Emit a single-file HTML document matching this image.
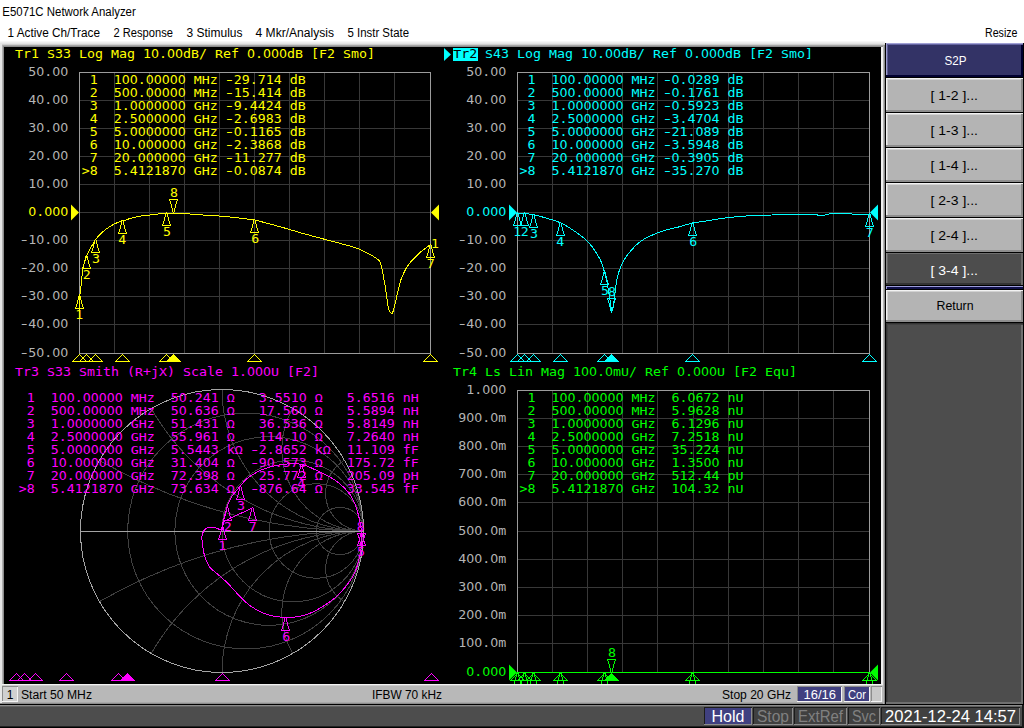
<!DOCTYPE html>
<html lang="en">
<head>
<meta charset="utf-8">
<title>E5071C Network Analyzer</title>
<style>
html,body{margin:0;padding:0;background:#fff;overflow:hidden}
body{width:1024px;height:728px;position:relative}
svg{position:absolute;left:0;top:0;display:block}
text{white-space:pre}
.m{font-family:'DejaVu Sans Mono','Liberation Mono',monospace;font-size:12.0px}
.d{font-family:'DejaVu Sans','Liberation Sans',sans-serif}
.u{font-size:10.8px}
.s{font-family:'Liberation Sans','DejaVu Sans',sans-serif}
</style>
</head>
<body>
<svg width="1024" height="728" viewBox="0 0 1024 728">
<defs>
<linearGradient id="gChan" x1="0" y1="0" x2="0" y2="1">
<stop offset="0" stop-color="#d4d4d4"/><stop offset="0.2" stop-color="#c2c2c2"/><stop offset="0.8" stop-color="#b6b6b6"/><stop offset="1" stop-color="#a0a0a0"/></linearGradient>
</defs>
<rect x="0" y="0" width="1024" height="728" fill="#ffffff"/>
<text class="s" x="2.3" y="16" font-size="12.3" fill="#000" textLength="133.5" lengthAdjust="spacingAndGlyphs">E5071C Network Analyzer</text>
<text class="s" x="7.5" y="37" font-size="12.3" fill="#000" textLength="92.5" lengthAdjust="spacingAndGlyphs">1 Active Ch/Trace</text>
<text class="s" x="113.5" y="37" font-size="12.3" fill="#000" textLength="59.5" lengthAdjust="spacingAndGlyphs">2 Response</text>
<text class="s" x="186.5" y="37" font-size="12.3" fill="#000" textLength="56" lengthAdjust="spacingAndGlyphs">3 Stimulus</text>
<text class="s" x="255.5" y="37" font-size="12.3" fill="#000" textLength="78.5" lengthAdjust="spacingAndGlyphs">4 Mkr/Analysis</text>
<text class="s" x="347.5" y="37" font-size="12.3" fill="#000" textLength="61.5" lengthAdjust="spacingAndGlyphs">5 Instr State</text>
<text class="s" x="985" y="37" font-size="12.3" fill="#000" textLength="32.5" lengthAdjust="spacingAndGlyphs">Resize</text>
<rect x="0" y="41" width="885" height="1" fill="#f6f6f6"/>
<rect x="0" y="42" width="885" height="1" fill="#ededed"/>
<rect x="0" y="43" width="885" height="1" fill="#e4e4e4"/>
<rect x="0" y="44" width="885" height="1" fill="#cfcfcf"/>
<rect x="0" y="45" width="885" height="1" fill="#a6a6a6"/>
<rect x="0" y="46" width="885" height="1" fill="#8c8c8c"/>
<rect x="0" y="44" width="2" height="660" fill="#e6e6e6"/>
<rect x="2" y="45" width="1" height="659" fill="#b0b0b0"/>
<rect x="3" y="46" width="1" height="658" fill="#8c8c8c"/>
<rect x="4" y="47" width="877" height="637" fill="#000"/>
<rect x="881" y="47" width="2" height="657" fill="#f0f0f0"/>
<rect x="883" y="46" width="1" height="658" fill="#b4b4b4"/>
<rect x="884" y="45" width="1" height="659" fill="#8c8c8c"/>
<rect x="0" y="684" width="885" height="20" fill="#b8b8b8"/>
<rect x="0" y="684" width="883" height="1" fill="#f2f2f2"/>
<rect x="0" y="685" width="883" height="1" fill="#cccccc"/>
<rect x="0" y="702" width="885" height="1" fill="#a8a8a8"/>
<rect x="0" y="703" width="885" height="1" fill="#8c8c8c"/>
<rect x="0" y="684" width="2" height="19" fill="#e6e6e6"/>
<rect x="883" y="684" width="1" height="20" fill="#b4b4b4"/>
<rect x="884" y="684" width="1" height="20" fill="#8c8c8c"/>
<rect x="885" y="43" width="139" height="662" fill="#000"/>
<rect x="886" y="43" width="137" height="32" fill="#333366"/>
<rect x="886" y="43" width="137" height="1" fill="#a0a0d4"/>
<rect x="886" y="44" width="137" height="1" fill="#6464a0"/>
<rect x="886" y="43" width="1" height="32" fill="#9c9cd0"/>
<rect x="887" y="44" width="1" height="31" fill="#5c5c94"/>
<rect x="886" y="75" width="137" height="2" fill="#000030"/>
<rect x="1021" y="45" width="2" height="32" fill="#000030"/>
<text class="s" x="944.5" y="64.6" font-size="13" fill="#fff" textLength="22" lengthAdjust="spacingAndGlyphs">S2P</text>
<rect x="886" y="78" width="137" height="34" fill="#b4b4b4"/>
<rect x="886" y="78" width="137" height="1" fill="#f2f2f2"/>
<rect x="886" y="79" width="137" height="1" fill="#d2d2d2"/>
<rect x="886" y="78" width="1" height="33" fill="#f2f2f2"/>
<rect x="887" y="79" width="1" height="32" fill="#d2d2d2"/>
<rect x="886" y="110" width="137" height="2" fill="#8e8e8e"/>
<rect x="1021" y="79" width="2" height="33" fill="#8e8e8e"/>
<text class="s" x="930.5" y="99.7" font-size="13" fill="#000" textLength="47.5" lengthAdjust="spacingAndGlyphs">[ 1-2 ]...</text>
<rect x="886" y="113" width="137" height="34" fill="#b4b4b4"/>
<rect x="886" y="113" width="137" height="1" fill="#f2f2f2"/>
<rect x="886" y="114" width="137" height="1" fill="#d2d2d2"/>
<rect x="886" y="113" width="1" height="33" fill="#f2f2f2"/>
<rect x="887" y="114" width="1" height="32" fill="#d2d2d2"/>
<rect x="886" y="145" width="137" height="2" fill="#8e8e8e"/>
<rect x="1021" y="114" width="2" height="33" fill="#8e8e8e"/>
<text class="s" x="930.5" y="134.7" font-size="13" fill="#000" textLength="47.5" lengthAdjust="spacingAndGlyphs">[ 1-3 ]...</text>
<rect x="886" y="148" width="137" height="34" fill="#b4b4b4"/>
<rect x="886" y="148" width="137" height="1" fill="#f2f2f2"/>
<rect x="886" y="149" width="137" height="1" fill="#d2d2d2"/>
<rect x="886" y="148" width="1" height="33" fill="#f2f2f2"/>
<rect x="887" y="149" width="1" height="32" fill="#d2d2d2"/>
<rect x="886" y="180" width="137" height="2" fill="#8e8e8e"/>
<rect x="1021" y="149" width="2" height="33" fill="#8e8e8e"/>
<text class="s" x="930.5" y="169.7" font-size="13" fill="#000" textLength="47.5" lengthAdjust="spacingAndGlyphs">[ 1-4 ]...</text>
<rect x="886" y="183" width="137" height="34" fill="#b4b4b4"/>
<rect x="886" y="183" width="137" height="1" fill="#f2f2f2"/>
<rect x="886" y="184" width="137" height="1" fill="#d2d2d2"/>
<rect x="886" y="183" width="1" height="33" fill="#f2f2f2"/>
<rect x="887" y="184" width="1" height="32" fill="#d2d2d2"/>
<rect x="886" y="215" width="137" height="2" fill="#8e8e8e"/>
<rect x="1021" y="184" width="2" height="33" fill="#8e8e8e"/>
<text class="s" x="930.5" y="204.7" font-size="13" fill="#000" textLength="47.5" lengthAdjust="spacingAndGlyphs">[ 2-3 ]...</text>
<rect x="886" y="218" width="137" height="34" fill="#b4b4b4"/>
<rect x="886" y="218" width="137" height="1" fill="#f2f2f2"/>
<rect x="886" y="219" width="137" height="1" fill="#d2d2d2"/>
<rect x="886" y="218" width="1" height="33" fill="#f2f2f2"/>
<rect x="887" y="219" width="1" height="32" fill="#d2d2d2"/>
<rect x="886" y="250" width="137" height="2" fill="#8e8e8e"/>
<rect x="1021" y="219" width="2" height="33" fill="#8e8e8e"/>
<text class="s" x="930.5" y="239.7" font-size="13" fill="#000" textLength="47.5" lengthAdjust="spacingAndGlyphs">[ 2-4 ]...</text>
<rect x="886" y="253" width="137" height="32" fill="#4d4d4d"/>
<rect x="886" y="253" width="137" height="1" fill="#6e6e6e"/>
<rect x="886" y="283" width="137" height="2" fill="#333333"/>
<rect x="886" y="253" width="1" height="30" fill="#888888"/>
<rect x="887" y="254" width="1" height="29" fill="#666666"/>
<rect x="1021" y="254" width="2" height="31" fill="#6a6a6a"/>
<text class="s" x="930.5" y="274.7" font-size="13" fill="#fff" textLength="47.5" lengthAdjust="spacingAndGlyphs">[ 3-4 ]...</text>
<rect x="886" y="286" width="137" height="1" fill="#9c9cd8"/>
<rect x="886" y="287" width="137" height="2" fill="#10104a"/>
<rect x="886" y="286" width="1" height="3" fill="#9c9cd8"/>
<rect x="886" y="290" width="137" height="32" fill="#b4b4b4"/>
<rect x="886" y="290" width="137" height="1" fill="#f2f2f2"/>
<rect x="886" y="291" width="137" height="1" fill="#d2d2d2"/>
<rect x="886" y="290" width="1" height="31" fill="#f2f2f2"/>
<rect x="887" y="291" width="1" height="30" fill="#d2d2d2"/>
<rect x="886" y="320" width="137" height="2" fill="#8e8e8e"/>
<rect x="1021" y="291" width="2" height="31" fill="#8e8e8e"/>
<text class="s" x="936.5" y="309.6" font-size="13" fill="#000" textLength="37" lengthAdjust="spacingAndGlyphs">Return</text>
<rect x="886" y="323" width="137" height="381" fill="#4d4d4d"/>
<rect x="886" y="323" width="137" height="1" fill="#333333"/>
<rect x="886" y="324" width="137" height="1" fill="#424242"/>
<rect x="886" y="323" width="1" height="379" fill="#333333"/>
<rect x="887" y="324" width="1" height="378" fill="#424242"/>
<rect x="886" y="702" width="137" height="2" fill="#707070"/>
<rect x="1021" y="325" width="2" height="379" fill="#707070"/>
<rect x="1023" y="43" width="1" height="662" fill="#000"/>
<rect x="2" y="686" width="16" height="16" fill="#d0d0d0"/>
<rect x="2" y="686" width="16" height="1" fill="#8c8c8c"/>
<rect x="2" y="686" width="1" height="16" fill="#8c8c8c"/>
<rect x="2" y="701" width="16" height="1" fill="#f4f4f4"/>
<rect x="17" y="687" width="1" height="15" fill="#f4f4f4"/>
<text class="s" x="6.8" y="699" font-size="12" fill="#000">1</text>
<text class="s" x="21" y="698.8" font-size="12" fill="#000" textLength="71" lengthAdjust="spacingAndGlyphs">Start 50 MHz</text>
<text class="s" x="372" y="698.8" font-size="12" fill="#000" textLength="70" lengthAdjust="spacingAndGlyphs">IFBW 70 kHz</text>
<text class="s" x="722" y="698.8" font-size="12" fill="#000" textLength="69" lengthAdjust="spacingAndGlyphs">Stop 20 GHz</text>
<rect x="797" y="686" width="45" height="16" fill="#404080"/>
<rect x="797" y="686" width="45" height="1" fill="#8c8c8c"/>
<rect x="797" y="686" width="1" height="16" fill="#8c8c8c"/>
<rect x="797" y="701" width="45" height="1" fill="#f4f4f4"/>
<rect x="841" y="687" width="1" height="15" fill="#f4f4f4"/>
<text class="s" x="803.5" y="698.8" font-size="12" fill="#fff" textLength="32.5" lengthAdjust="spacingAndGlyphs">16/16</text>
<rect x="844" y="686" width="26" height="16" fill="#404080"/>
<rect x="844" y="686" width="26" height="1" fill="#8c8c8c"/>
<rect x="844" y="686" width="1" height="16" fill="#8c8c8c"/>
<rect x="844" y="701" width="26" height="1" fill="#f4f4f4"/>
<rect x="869" y="687" width="1" height="15" fill="#f4f4f4"/>
<text class="s" x="848" y="698.8" font-size="12" fill="#fff" textLength="18" lengthAdjust="spacingAndGlyphs">Cor</text>
<rect x="871" y="686" width="11" height="16" fill="#c8c8c8"/>
<rect x="871" y="686" width="11" height="1" fill="#8c8c8c"/>
<rect x="871" y="686" width="1" height="16" fill="#8c8c8c"/>
<rect x="871" y="701" width="11" height="1" fill="#f4f4f4"/>
<rect x="881" y="687" width="1" height="15" fill="#f4f4f4"/>
<rect x="0" y="704" width="1024" height="24" fill="#4d4d4d"/>
<rect x="0" y="704" width="1024" height="1" fill="#000"/>
<rect x="0" y="705" width="1022" height="1" fill="#8a8a8a"/>
<rect x="0" y="706" width="1022" height="1" fill="#626262"/>
<rect x="0" y="726" width="1024" height="1" fill="#222"/>
<rect x="0" y="727" width="1024" height="1" fill="#000"/>
<rect x="1022" y="705" width="2" height="23" fill="#1a1a1a"/>
<rect x="704" y="707" width="48" height="18" fill="#404080"/>
<rect x="704" y="707" width="48" height="1" fill="#1c1c1c"/>
<rect x="704" y="707" width="1" height="17" fill="#1c1c1c"/>
<rect x="704" y="724" width="48" height="1" fill="#8c8c8c"/>
<rect x="751" y="708" width="1" height="17" fill="#8c8c8c"/>
<text class="s" x="711.5" y="721.6" font-size="16.3" fill="#fff" textLength="33" lengthAdjust="spacingAndGlyphs">Hold</text>
<rect x="753" y="707" width="40" height="18" fill="#404040"/>
<rect x="753" y="707" width="40" height="1" fill="#1c1c1c"/>
<rect x="753" y="707" width="1" height="17" fill="#1c1c1c"/>
<rect x="753" y="724" width="40" height="1" fill="#8c8c8c"/>
<rect x="792" y="708" width="1" height="17" fill="#8c8c8c"/>
<text class="s" x="757" y="721.6" font-size="16.3" fill="#808080" textLength="32" lengthAdjust="spacingAndGlyphs">Stop</text>
<rect x="794" y="707" width="53" height="18" fill="#404040"/>
<rect x="794" y="707" width="53" height="1" fill="#1c1c1c"/>
<rect x="794" y="707" width="1" height="17" fill="#1c1c1c"/>
<rect x="794" y="724" width="53" height="1" fill="#8c8c8c"/>
<rect x="846" y="708" width="1" height="17" fill="#8c8c8c"/>
<text class="s" x="798" y="721.6" font-size="16.3" fill="#808080" textLength="45" lengthAdjust="spacingAndGlyphs">ExtRef</text>
<rect x="848" y="707" width="32" height="18" fill="#404040"/>
<rect x="848" y="707" width="32" height="1" fill="#1c1c1c"/>
<rect x="848" y="707" width="1" height="17" fill="#1c1c1c"/>
<rect x="848" y="724" width="32" height="1" fill="#8c8c8c"/>
<rect x="879" y="708" width="1" height="17" fill="#8c8c8c"/>
<text class="s" x="852" y="721.6" font-size="16.3" fill="#808080" textLength="24" lengthAdjust="spacingAndGlyphs">Svc</text>
<rect x="881" y="707" width="139" height="18" fill="#404040"/>
<rect x="881" y="707" width="139" height="1" fill="#1c1c1c"/>
<rect x="881" y="707" width="1" height="17" fill="#1c1c1c"/>
<rect x="881" y="724" width="139" height="1" fill="#8c8c8c"/>
<rect x="1019" y="708" width="1" height="17" fill="#8c8c8c"/>
<text class="s" x="885" y="721.6" font-size="16.3" fill="#fff" textLength="131" lengthAdjust="spacingAndGlyphs">2021-12-24 14:57</text>
<defs><path id="mu" shape-rendering="crispEdges" d="M0 0h1v1h-1zM-1 1h1v4h-1zM1 1h1v4h-1zM-2 5h1v4h-1zM2 5h1v4h-1zM-3 9h1v3h-1zM3 9h1v3h-1zM-4 12h1v1h-1zM4 12h1v1h-1zM-4 13h9v1h-9z"/><path id="md" shape-rendering="crispEdges" d="M0 0h1v1h-1zM-1 -4h1v4h-1zM1 -4h1v4h-1zM-2 -8h1v4h-1zM2 -8h1v4h-1zM-3 -11h1v3h-1zM3 -11h1v3h-1zM-4 -12h1v1h-1zM4 -12h1v1h-1zM-4 -13h9v1h-9z"/></defs>
<rect x="114" y="72" width="1" height="282" fill="#383838"/>
<rect x="149" y="72" width="1" height="282" fill="#383838"/>
<rect x="184" y="72" width="1" height="282" fill="#383838"/>
<rect x="219" y="72" width="1" height="282" fill="#383838"/>
<rect x="254" y="72" width="1" height="282" fill="#383838"/>
<rect x="289" y="72" width="1" height="282" fill="#383838"/>
<rect x="324" y="72" width="1" height="282" fill="#383838"/>
<rect x="359" y="72" width="1" height="282" fill="#383838"/>
<rect x="394" y="72" width="1" height="282" fill="#383838"/>
<rect x="79" y="100" width="352" height="1" fill="#383838"/>
<rect x="79" y="128" width="352" height="1" fill="#383838"/>
<rect x="79" y="156" width="352" height="1" fill="#383838"/>
<rect x="79" y="184" width="352" height="1" fill="#383838"/>
<rect x="79" y="212" width="352" height="1" fill="#383838"/>
<rect x="79" y="240" width="352" height="1" fill="#383838"/>
<rect x="79" y="268" width="352" height="1" fill="#383838"/>
<rect x="79" y="296" width="352" height="1" fill="#383838"/>
<rect x="79" y="324" width="352" height="1" fill="#383838"/>
<rect x="79" y="72" width="352" height="1" fill="#9c9c9c"/>
<rect x="79" y="353" width="352" height="1" fill="#9c9c9c"/>
<rect x="79" y="72" width="1" height="282" fill="#9c9c9c"/>
<rect x="430" y="72" width="1" height="282" fill="#9c9c9c"/>
<text class="m" y="58.3" fill="#ffff00"><tspan class="u" x="15" textLength="8" lengthAdjust="spacingAndGlyphs">T</tspan><tspan x="23" textLength="16" lengthAdjust="spacingAndGlyphs">r1</tspan> <tspan class="u" x="47" textLength="8" lengthAdjust="spacingAndGlyphs">S</tspan><tspan x="55" textLength="16" lengthAdjust="spacingAndGlyphs">33</tspan> <tspan class="u" x="79" textLength="8" lengthAdjust="spacingAndGlyphs">L</tspan><tspan x="87" textLength="16" lengthAdjust="spacingAndGlyphs">og</tspan> <tspan class="u" x="111" textLength="8" lengthAdjust="spacingAndGlyphs">M</tspan><tspan x="119" textLength="32" lengthAdjust="spacingAndGlyphs">ag 1</tspan><tspan class="d" x="151" textLength="8" lengthAdjust="spacingAndGlyphs">0</tspan><tspan x="159" textLength="8" lengthAdjust="spacingAndGlyphs">.</tspan><tspan class="d" x="167" textLength="16" lengthAdjust="spacingAndGlyphs">00</tspan><tspan x="183" textLength="8" lengthAdjust="spacingAndGlyphs">d</tspan><tspan class="u" x="191" textLength="8" lengthAdjust="spacingAndGlyphs">B</tspan><tspan x="199" textLength="8" lengthAdjust="spacingAndGlyphs">/</tspan> <tspan class="u" x="215" textLength="8" lengthAdjust="spacingAndGlyphs">R</tspan><tspan x="223" textLength="16" lengthAdjust="spacingAndGlyphs">ef</tspan> <tspan class="d" x="247" textLength="8" lengthAdjust="spacingAndGlyphs">0</tspan><tspan x="255" textLength="8" lengthAdjust="spacingAndGlyphs">.</tspan><tspan class="d" x="263" textLength="24" lengthAdjust="spacingAndGlyphs">000</tspan><tspan x="287" textLength="8" lengthAdjust="spacingAndGlyphs">d</tspan><tspan class="u" x="295" textLength="8" lengthAdjust="spacingAndGlyphs">B</tspan> <tspan x="311" textLength="8" lengthAdjust="spacingAndGlyphs">[</tspan><tspan class="u" x="319" textLength="8" lengthAdjust="spacingAndGlyphs">F</tspan><tspan x="327" textLength="8" lengthAdjust="spacingAndGlyphs">2</tspan> <tspan class="u" x="343" textLength="8" lengthAdjust="spacingAndGlyphs">S</tspan><tspan x="351" textLength="24" lengthAdjust="spacingAndGlyphs">mo]</tspan></text>
<text class="m" y="75.9" fill="#b4b4b4"><tspan x="28.3" textLength="8" lengthAdjust="spacingAndGlyphs">5</tspan><tspan class="d" x="36.3" textLength="8" lengthAdjust="spacingAndGlyphs">0</tspan><tspan x="44.3" textLength="8" lengthAdjust="spacingAndGlyphs">.</tspan><tspan class="d" x="52.3" textLength="16" lengthAdjust="spacingAndGlyphs">00</tspan></text>
<text class="m" y="103.9" fill="#b4b4b4"><tspan x="28.3" textLength="8" lengthAdjust="spacingAndGlyphs">4</tspan><tspan class="d" x="36.3" textLength="8" lengthAdjust="spacingAndGlyphs">0</tspan><tspan x="44.3" textLength="8" lengthAdjust="spacingAndGlyphs">.</tspan><tspan class="d" x="52.3" textLength="16" lengthAdjust="spacingAndGlyphs">00</tspan></text>
<text class="m" y="131.9" fill="#b4b4b4"><tspan x="28.3" textLength="8" lengthAdjust="spacingAndGlyphs">3</tspan><tspan class="d" x="36.3" textLength="8" lengthAdjust="spacingAndGlyphs">0</tspan><tspan x="44.3" textLength="8" lengthAdjust="spacingAndGlyphs">.</tspan><tspan class="d" x="52.3" textLength="16" lengthAdjust="spacingAndGlyphs">00</tspan></text>
<text class="m" y="159.9" fill="#b4b4b4"><tspan x="28.3" textLength="8" lengthAdjust="spacingAndGlyphs">2</tspan><tspan class="d" x="36.3" textLength="8" lengthAdjust="spacingAndGlyphs">0</tspan><tspan x="44.3" textLength="8" lengthAdjust="spacingAndGlyphs">.</tspan><tspan class="d" x="52.3" textLength="16" lengthAdjust="spacingAndGlyphs">00</tspan></text>
<text class="m" y="187.9" fill="#b4b4b4"><tspan x="28.3" textLength="8" lengthAdjust="spacingAndGlyphs">1</tspan><tspan class="d" x="36.3" textLength="8" lengthAdjust="spacingAndGlyphs">0</tspan><tspan x="44.3" textLength="8" lengthAdjust="spacingAndGlyphs">.</tspan><tspan class="d" x="52.3" textLength="16" lengthAdjust="spacingAndGlyphs">00</tspan></text>
<text class="m" y="215.9" fill="#ffff00"><tspan class="d" x="28.3" textLength="8" lengthAdjust="spacingAndGlyphs">0</tspan><tspan x="36.3" textLength="8" lengthAdjust="spacingAndGlyphs">.</tspan><tspan class="d" x="44.3" textLength="24" lengthAdjust="spacingAndGlyphs">000</tspan></text>
<text class="m" y="243.9" fill="#b4b4b4"><tspan x="18.4" textLength="11.4" lengthAdjust="spacingAndGlyphs">-</tspan><tspan x="28.3" textLength="8" lengthAdjust="spacingAndGlyphs">1</tspan><tspan class="d" x="36.3" textLength="8" lengthAdjust="spacingAndGlyphs">0</tspan><tspan x="44.3" textLength="8" lengthAdjust="spacingAndGlyphs">.</tspan><tspan class="d" x="52.3" textLength="16" lengthAdjust="spacingAndGlyphs">00</tspan></text>
<text class="m" y="271.9" fill="#b4b4b4"><tspan x="18.4" textLength="11.4" lengthAdjust="spacingAndGlyphs">-</tspan><tspan x="28.3" textLength="8" lengthAdjust="spacingAndGlyphs">2</tspan><tspan class="d" x="36.3" textLength="8" lengthAdjust="spacingAndGlyphs">0</tspan><tspan x="44.3" textLength="8" lengthAdjust="spacingAndGlyphs">.</tspan><tspan class="d" x="52.3" textLength="16" lengthAdjust="spacingAndGlyphs">00</tspan></text>
<text class="m" y="299.9" fill="#b4b4b4"><tspan x="18.4" textLength="11.4" lengthAdjust="spacingAndGlyphs">-</tspan><tspan x="28.3" textLength="8" lengthAdjust="spacingAndGlyphs">3</tspan><tspan class="d" x="36.3" textLength="8" lengthAdjust="spacingAndGlyphs">0</tspan><tspan x="44.3" textLength="8" lengthAdjust="spacingAndGlyphs">.</tspan><tspan class="d" x="52.3" textLength="16" lengthAdjust="spacingAndGlyphs">00</tspan></text>
<text class="m" y="327.9" fill="#b4b4b4"><tspan x="18.4" textLength="11.4" lengthAdjust="spacingAndGlyphs">-</tspan><tspan x="28.3" textLength="8" lengthAdjust="spacingAndGlyphs">4</tspan><tspan class="d" x="36.3" textLength="8" lengthAdjust="spacingAndGlyphs">0</tspan><tspan x="44.3" textLength="8" lengthAdjust="spacingAndGlyphs">.</tspan><tspan class="d" x="52.3" textLength="16" lengthAdjust="spacingAndGlyphs">00</tspan></text>
<text class="m" y="356.9" fill="#b4b4b4"><tspan x="18.4" textLength="11.4" lengthAdjust="spacingAndGlyphs">-</tspan><tspan x="28.3" textLength="8" lengthAdjust="spacingAndGlyphs">5</tspan><tspan class="d" x="36.3" textLength="8" lengthAdjust="spacingAndGlyphs">0</tspan><tspan x="44.3" textLength="8" lengthAdjust="spacingAndGlyphs">.</tspan><tspan class="d" x="52.3" textLength="16" lengthAdjust="spacingAndGlyphs">00</tspan></text>
<text class="m" y="84.3" fill="#ffff00"><tspan x="89.7" textLength="32" lengthAdjust="spacingAndGlyphs">1  1</tspan><tspan class="d" x="121.7" textLength="16" lengthAdjust="spacingAndGlyphs">00</tspan><tspan x="137.7" textLength="8" lengthAdjust="spacingAndGlyphs">.</tspan><tspan class="d" x="145.7" textLength="40" lengthAdjust="spacingAndGlyphs">00000</tspan> <tspan x="193.7" textLength="0" lengthAdjust="spacingAndGlyphs"></tspan><tspan class="u" x="193.7" textLength="16" lengthAdjust="spacingAndGlyphs">MH</tspan><tspan x="209.7" textLength="8" lengthAdjust="spacingAndGlyphs">z</tspan> <tspan x="223.8" textLength="11.4" lengthAdjust="spacingAndGlyphs">-</tspan><tspan x="233.7" textLength="64" lengthAdjust="spacingAndGlyphs">29.714 d</tspan><tspan class="u" x="297.7" textLength="8" lengthAdjust="spacingAndGlyphs">B</tspan></text>
<text class="m" y="97.3" fill="#ffff00"><tspan x="89.7" textLength="32" lengthAdjust="spacingAndGlyphs">2  5</tspan><tspan class="d" x="121.7" textLength="16" lengthAdjust="spacingAndGlyphs">00</tspan><tspan x="137.7" textLength="8" lengthAdjust="spacingAndGlyphs">.</tspan><tspan class="d" x="145.7" textLength="40" lengthAdjust="spacingAndGlyphs">00000</tspan> <tspan x="193.7" textLength="0" lengthAdjust="spacingAndGlyphs"></tspan><tspan class="u" x="193.7" textLength="16" lengthAdjust="spacingAndGlyphs">MH</tspan><tspan x="209.7" textLength="8" lengthAdjust="spacingAndGlyphs">z</tspan> <tspan x="223.8" textLength="11.4" lengthAdjust="spacingAndGlyphs">-</tspan><tspan x="233.7" textLength="64" lengthAdjust="spacingAndGlyphs">15.414 d</tspan><tspan class="u" x="297.7" textLength="8" lengthAdjust="spacingAndGlyphs">B</tspan></text>
<text class="m" y="110.3" fill="#ffff00"><tspan x="89.7" textLength="40" lengthAdjust="spacingAndGlyphs">3  1.</tspan><tspan class="d" x="129.7" textLength="56" lengthAdjust="spacingAndGlyphs">0000000</tspan> <tspan x="193.7" textLength="0" lengthAdjust="spacingAndGlyphs"></tspan><tspan class="u" x="193.7" textLength="16" lengthAdjust="spacingAndGlyphs">GH</tspan><tspan x="209.7" textLength="8" lengthAdjust="spacingAndGlyphs">z</tspan> <tspan x="223.8" textLength="11.4" lengthAdjust="spacingAndGlyphs">-</tspan><tspan x="233.7" textLength="64" lengthAdjust="spacingAndGlyphs">9.4424 d</tspan><tspan class="u" x="297.7" textLength="8" lengthAdjust="spacingAndGlyphs">B</tspan></text>
<text class="m" y="123.3" fill="#ffff00"><tspan x="89.7" textLength="48" lengthAdjust="spacingAndGlyphs">4  2.5</tspan><tspan class="d" x="137.7" textLength="48" lengthAdjust="spacingAndGlyphs">000000</tspan> <tspan x="193.7" textLength="0" lengthAdjust="spacingAndGlyphs"></tspan><tspan class="u" x="193.7" textLength="16" lengthAdjust="spacingAndGlyphs">GH</tspan><tspan x="209.7" textLength="8" lengthAdjust="spacingAndGlyphs">z</tspan> <tspan x="223.8" textLength="11.4" lengthAdjust="spacingAndGlyphs">-</tspan><tspan x="233.7" textLength="64" lengthAdjust="spacingAndGlyphs">2.6983 d</tspan><tspan class="u" x="297.7" textLength="8" lengthAdjust="spacingAndGlyphs">B</tspan></text>
<text class="m" y="136.3" fill="#ffff00"><tspan x="89.7" textLength="40" lengthAdjust="spacingAndGlyphs">5  5.</tspan><tspan class="d" x="129.7" textLength="56" lengthAdjust="spacingAndGlyphs">0000000</tspan> <tspan x="193.7" textLength="0" lengthAdjust="spacingAndGlyphs"></tspan><tspan class="u" x="193.7" textLength="16" lengthAdjust="spacingAndGlyphs">GH</tspan><tspan x="209.7" textLength="8" lengthAdjust="spacingAndGlyphs">z</tspan> <tspan x="223.8" textLength="11.4" lengthAdjust="spacingAndGlyphs">-</tspan><tspan class="d" x="233.7" textLength="8" lengthAdjust="spacingAndGlyphs">0</tspan><tspan x="241.7" textLength="56" lengthAdjust="spacingAndGlyphs">.1165 d</tspan><tspan class="u" x="297.7" textLength="8" lengthAdjust="spacingAndGlyphs">B</tspan></text>
<text class="m" y="149.3" fill="#ffff00"><tspan x="89.7" textLength="32" lengthAdjust="spacingAndGlyphs">6  1</tspan><tspan class="d" x="121.7" textLength="8" lengthAdjust="spacingAndGlyphs">0</tspan><tspan x="129.7" textLength="8" lengthAdjust="spacingAndGlyphs">.</tspan><tspan class="d" x="137.7" textLength="48" lengthAdjust="spacingAndGlyphs">000000</tspan> <tspan x="193.7" textLength="0" lengthAdjust="spacingAndGlyphs"></tspan><tspan class="u" x="193.7" textLength="16" lengthAdjust="spacingAndGlyphs">GH</tspan><tspan x="209.7" textLength="8" lengthAdjust="spacingAndGlyphs">z</tspan> <tspan x="223.8" textLength="11.4" lengthAdjust="spacingAndGlyphs">-</tspan><tspan x="233.7" textLength="64" lengthAdjust="spacingAndGlyphs">2.3868 d</tspan><tspan class="u" x="297.7" textLength="8" lengthAdjust="spacingAndGlyphs">B</tspan></text>
<text class="m" y="162.3" fill="#ffff00"><tspan x="89.7" textLength="32" lengthAdjust="spacingAndGlyphs">7  2</tspan><tspan class="d" x="121.7" textLength="8" lengthAdjust="spacingAndGlyphs">0</tspan><tspan x="129.7" textLength="8" lengthAdjust="spacingAndGlyphs">.</tspan><tspan class="d" x="137.7" textLength="48" lengthAdjust="spacingAndGlyphs">000000</tspan> <tspan x="193.7" textLength="0" lengthAdjust="spacingAndGlyphs"></tspan><tspan class="u" x="193.7" textLength="16" lengthAdjust="spacingAndGlyphs">GH</tspan><tspan x="209.7" textLength="8" lengthAdjust="spacingAndGlyphs">z</tspan> <tspan x="223.8" textLength="11.4" lengthAdjust="spacingAndGlyphs">-</tspan><tspan x="233.7" textLength="64" lengthAdjust="spacingAndGlyphs">11.277 d</tspan><tspan class="u" x="297.7" textLength="8" lengthAdjust="spacingAndGlyphs">B</tspan></text>
<text class="m" y="175.3" fill="#ffff00"><tspan x="81.7" textLength="96" lengthAdjust="spacingAndGlyphs">&gt;8  5.412187</tspan><tspan class="d" x="177.7" textLength="8" lengthAdjust="spacingAndGlyphs">0</tspan> <tspan x="193.7" textLength="0" lengthAdjust="spacingAndGlyphs"></tspan><tspan class="u" x="193.7" textLength="16" lengthAdjust="spacingAndGlyphs">GH</tspan><tspan x="209.7" textLength="8" lengthAdjust="spacingAndGlyphs">z</tspan> <tspan x="223.8" textLength="11.4" lengthAdjust="spacingAndGlyphs">-</tspan><tspan class="d" x="233.7" textLength="8" lengthAdjust="spacingAndGlyphs">0</tspan><tspan x="241.7" textLength="8" lengthAdjust="spacingAndGlyphs">.</tspan><tspan class="d" x="249.7" textLength="8" lengthAdjust="spacingAndGlyphs">0</tspan><tspan x="257.7" textLength="40" lengthAdjust="spacingAndGlyphs">874 d</tspan><tspan class="u" x="297.7" textLength="8" lengthAdjust="spacingAndGlyphs">B</tspan></text>
<polyline points="79.5,312.3 79.5,309.6 79.5,305.7 79.5,301.6 79.6,298.3 79.8,296.2 80.0,294.6 80.2,293.2 80.5,291.3 80.7,288.8 81.0,285.9 81.2,283.0 81.5,280.3 81.7,278.0 82.0,275.9 82.2,273.8 82.5,271.8 82.8,269.7 83.2,267.6 83.6,265.6 84.0,263.8 84.5,262.1 85.1,260.4 85.6,258.9 86.0,257.8 86.1,257.3 86.1,257.2 86.2,257.1 86.5,256.3 87.3,254.6 88.4,252.4 89.5,250.0 90.5,248.1 91.2,246.7 91.8,245.7 92.4,244.8 93.0,243.8 93.5,242.8 94.0,241.8 94.6,240.8 95.5,239.5 96.7,238.1 98.1,236.4 99.7,234.7 101.5,233.0 103.6,231.2 105.9,229.3 108.4,227.5 111.0,225.8 114.0,224.2 117.2,222.7 120.3,221.5 122.5,220.6 123.6,220.2 123.9,220.3 123.9,220.5 124.2,220.5 124.8,220.3 125.5,220.1 126.2,219.8 127.0,219.5 127.8,219.2 128.5,219.0 129.3,218.8 130.2,218.5 131.1,218.2 132.1,218.0 133.1,217.8 134.1,217.5 135.1,217.2 136.2,217.0 137.3,216.8 138.6,216.5 140.0,216.2 141.5,216.0 143.1,215.8 145.0,215.5 147.3,215.2 150.0,215.0 152.6,214.7 155.0,214.5 156.6,214.3 157.7,214.0 159.2,213.8 162.0,213.7 166.9,213.6 173.3,213.6 179.8,213.6 185.0,213.7 188.3,213.8 190.4,214.0 192.3,214.3 195.0,214.5 198.8,214.7 203.2,215.0 207.6,215.2 211.7,215.5 215.2,215.8 218.5,216.0 221.5,216.2 224.4,216.5 227.1,216.8 229.6,217.0 231.9,217.2 234.2,217.5 236.4,217.8 238.6,218.0 240.6,218.2 242.7,218.5 244.8,218.8 247.0,219.0 249.0,219.3 250.7,219.5 252.0,219.6 253.0,219.6 253.8,219.6 254.5,219.7 255.1,219.9 255.5,220.1 255.9,220.3 256.5,220.5 257.3,220.7 258.2,220.9 259.3,221.2 260.5,221.5 261.7,221.8 262.8,222.1 264.5,222.5 267.0,223.2 270.8,224.2 275.5,225.5 280.6,226.9 285.5,228.3 290.2,229.7 295.0,231.1 299.7,232.5 304.5,233.9 309.3,235.2 314.0,236.5 318.8,237.8 323.5,239.0 328.3,240.3 333.2,241.6 337.9,242.8 342.0,243.9 345.5,244.8 348.5,245.7 351.1,246.4 353.5,247.1 355.4,247.7 356.8,248.2 358.2,248.7 360.0,249.5 362.3,250.6 365.0,251.9 367.7,253.2 370.0,254.4 371.8,255.4 373.4,256.4 374.8,257.3 376.0,258.1 377.0,258.8 377.9,259.3 378.6,259.9 379.2,260.6 379.7,261.4 380.2,262.4 380.6,263.5 381.0,264.9 381.5,266.7 382.0,268.9 382.4,271.2 382.9,273.6 383.4,275.9 383.8,278.3 384.2,280.8 384.7,283.5 385.2,286.4 385.6,289.5 386.1,292.7 386.6,295.8 387.1,299.1 387.5,302.5 387.9,305.7 388.4,308.2 388.9,309.8 389.4,310.8 389.8,311.5 390.3,312.1 390.8,312.8 391.2,313.4 391.7,313.8 392.1,313.7 392.5,313.1 392.8,312.2 393.2,310.9 393.6,309.4 394.1,307.6 394.7,305.4 395.3,303.1 395.8,300.8 396.3,298.5 396.8,296.2 397.3,294.0 397.7,292.1 398.0,290.7 398.3,289.7 398.5,288.6 398.9,287.2 399.4,285.3 400.0,283.1 400.6,280.8 401.4,278.5 402.4,276.1 403.5,273.6 404.7,271.2 405.7,269.2 406.5,267.7 407.2,266.5 408.0,265.4 408.8,264.3 409.8,263.1 410.8,261.9 412.0,260.6 413.2,259.3 414.6,257.8 416.1,256.3 417.7,254.7 419.3,253.2 420.9,251.8 422.5,250.5 424.0,249.3 425.5,248.2 427.0,247.1 428.4,246.1 429.6,245.3 430.5,244.7" fill="none" stroke="#ffff00" stroke-width="1" shape-rendering="crispEdges"/>
<polygon points="71,204.5 79,212.5 71,220.5" fill="#ffff00"/>
<polygon points="439,204.5 431,212.5 439,220.5" fill="#ffff00"/>
<use href="#mu" x="79" y="295" fill="#ffff00"/>
<text class="m" y="319" fill="#ffff00"><tspan x="75.2" textLength="8" lengthAdjust="spacingAndGlyphs">1</tspan></text>
<use href="#mu" x="86" y="255" fill="#ffff00"/>
<text class="m" y="279" fill="#ffff00"><tspan x="82.8" textLength="8" lengthAdjust="spacingAndGlyphs">2</tspan></text>
<use href="#mu" x="95" y="239" fill="#ffff00"/>
<text class="m" y="263" fill="#ffff00"><tspan x="91.9" textLength="8" lengthAdjust="spacingAndGlyphs">3</tspan></text>
<use href="#mu" x="122" y="220" fill="#ffff00"/>
<text class="m" y="244" fill="#ffff00"><tspan x="118.2" textLength="8" lengthAdjust="spacingAndGlyphs">4</tspan></text>
<use href="#mu" x="166" y="212" fill="#ffff00"/>
<text class="m" y="236" fill="#ffff00"><tspan x="163.1" textLength="8" lengthAdjust="spacingAndGlyphs">5</tspan></text>
<use href="#mu" x="254" y="219" fill="#ffff00"/>
<text class="m" y="243" fill="#ffff00"><tspan x="251.2" textLength="8" lengthAdjust="spacingAndGlyphs">6</tspan></text>
<use href="#mu" x="430" y="244" fill="#ffff00"/>
<text class="m" y="268" fill="#ffff00"><tspan x="426.8" textLength="8" lengthAdjust="spacingAndGlyphs">7</tspan></text>
<use href="#md" x="173" y="212" fill="#ffff00"/>
<text class="m" y="196.9" fill="#ffff00"><tspan x="169.9" textLength="8" lengthAdjust="spacingAndGlyphs">8</tspan></text>
<text class="m" y="247.5" fill="#ffff00"><tspan x="431" textLength="8" lengthAdjust="spacingAndGlyphs">1</tspan></text>
<polygon points="72.5,361.5 79.5,354.5 86.5,361.5" fill="none" stroke="#ffff00" stroke-width="1" shape-rendering="crispEdges"/>
<polygon points="79.5,361.5 86.5,354.5 93.5,361.5" fill="none" stroke="#ffff00" stroke-width="1" shape-rendering="crispEdges"/>
<polygon points="88.5,361.5 95.5,354.5 102.5,361.5" fill="none" stroke="#ffff00" stroke-width="1" shape-rendering="crispEdges"/>
<polygon points="115.5,361.5 122.5,354.5 129.5,361.5" fill="none" stroke="#ffff00" stroke-width="1" shape-rendering="crispEdges"/>
<polygon points="159.5,361.5 166.5,354.5 173.5,361.5" fill="none" stroke="#ffff00" stroke-width="1" shape-rendering="crispEdges"/>
<polygon points="247.5,361.5 254.5,354.5 261.5,361.5" fill="none" stroke="#ffff00" stroke-width="1" shape-rendering="crispEdges"/>
<polygon points="423.5,361.5 430.5,354.5 437.5,361.5" fill="none" stroke="#ffff00" stroke-width="1" shape-rendering="crispEdges"/>
<polygon points="166.5,361.5 173.5,354.5 180.5,361.5" fill="#ffff00" stroke="#ffff00" stroke-width="1" shape-rendering="crispEdges"/>
<rect x="552" y="72" width="1" height="282" fill="#383838"/>
<rect x="587" y="72" width="1" height="282" fill="#383838"/>
<rect x="622" y="72" width="1" height="282" fill="#383838"/>
<rect x="657" y="72" width="1" height="282" fill="#383838"/>
<rect x="693" y="72" width="1" height="282" fill="#383838"/>
<rect x="728" y="72" width="1" height="282" fill="#383838"/>
<rect x="763" y="72" width="1" height="282" fill="#383838"/>
<rect x="798" y="72" width="1" height="282" fill="#383838"/>
<rect x="833" y="72" width="1" height="282" fill="#383838"/>
<rect x="517" y="100" width="353" height="1" fill="#383838"/>
<rect x="517" y="128" width="353" height="1" fill="#383838"/>
<rect x="517" y="156" width="353" height="1" fill="#383838"/>
<rect x="517" y="184" width="353" height="1" fill="#383838"/>
<rect x="517" y="212" width="353" height="1" fill="#383838"/>
<rect x="517" y="240" width="353" height="1" fill="#383838"/>
<rect x="517" y="268" width="353" height="1" fill="#383838"/>
<rect x="517" y="296" width="353" height="1" fill="#383838"/>
<rect x="517" y="324" width="353" height="1" fill="#383838"/>
<rect x="517" y="72" width="353" height="1" fill="#9c9c9c"/>
<rect x="517" y="353" width="353" height="1" fill="#9c9c9c"/>
<rect x="517" y="72" width="1" height="282" fill="#9c9c9c"/>
<rect x="869" y="72" width="1" height="282" fill="#9c9c9c"/>
<polygon points="444,48 451,54.5 444,61" fill="#00ffff"/>
<rect x="453" y="48" width="25" height="13" fill="#00ffff"/>
<text class="m" y="58.3" fill="#000"><tspan class="u" x="453.3" textLength="8" lengthAdjust="spacingAndGlyphs">T</tspan><tspan x="461.3" textLength="16" lengthAdjust="spacingAndGlyphs">r2</tspan></text>
<text class="m" y="58.3" fill="#00ffff"><tspan class="u" x="485" textLength="8" lengthAdjust="spacingAndGlyphs">S</tspan><tspan x="493" textLength="16" lengthAdjust="spacingAndGlyphs">43</tspan> <tspan class="u" x="517" textLength="8" lengthAdjust="spacingAndGlyphs">L</tspan><tspan x="525" textLength="16" lengthAdjust="spacingAndGlyphs">og</tspan> <tspan class="u" x="549" textLength="8" lengthAdjust="spacingAndGlyphs">M</tspan><tspan x="557" textLength="32" lengthAdjust="spacingAndGlyphs">ag 1</tspan><tspan class="d" x="589" textLength="8" lengthAdjust="spacingAndGlyphs">0</tspan><tspan x="597" textLength="8" lengthAdjust="spacingAndGlyphs">.</tspan><tspan class="d" x="605" textLength="16" lengthAdjust="spacingAndGlyphs">00</tspan><tspan x="621" textLength="8" lengthAdjust="spacingAndGlyphs">d</tspan><tspan class="u" x="629" textLength="8" lengthAdjust="spacingAndGlyphs">B</tspan><tspan x="637" textLength="8" lengthAdjust="spacingAndGlyphs">/</tspan> <tspan class="u" x="653" textLength="8" lengthAdjust="spacingAndGlyphs">R</tspan><tspan x="661" textLength="16" lengthAdjust="spacingAndGlyphs">ef</tspan> <tspan class="d" x="685" textLength="8" lengthAdjust="spacingAndGlyphs">0</tspan><tspan x="693" textLength="8" lengthAdjust="spacingAndGlyphs">.</tspan><tspan class="d" x="701" textLength="24" lengthAdjust="spacingAndGlyphs">000</tspan><tspan x="725" textLength="8" lengthAdjust="spacingAndGlyphs">d</tspan><tspan class="u" x="733" textLength="8" lengthAdjust="spacingAndGlyphs">B</tspan> <tspan x="749" textLength="8" lengthAdjust="spacingAndGlyphs">[</tspan><tspan class="u" x="757" textLength="8" lengthAdjust="spacingAndGlyphs">F</tspan><tspan x="765" textLength="8" lengthAdjust="spacingAndGlyphs">2</tspan> <tspan class="u" x="781" textLength="8" lengthAdjust="spacingAndGlyphs">S</tspan><tspan x="789" textLength="24" lengthAdjust="spacingAndGlyphs">mo]</tspan></text>
<text class="m" y="75.9" fill="#b4b4b4"><tspan x="466.3" textLength="8" lengthAdjust="spacingAndGlyphs">5</tspan><tspan class="d" x="474.3" textLength="8" lengthAdjust="spacingAndGlyphs">0</tspan><tspan x="482.3" textLength="8" lengthAdjust="spacingAndGlyphs">.</tspan><tspan class="d" x="490.3" textLength="16" lengthAdjust="spacingAndGlyphs">00</tspan></text>
<text class="m" y="103.9" fill="#b4b4b4"><tspan x="466.3" textLength="8" lengthAdjust="spacingAndGlyphs">4</tspan><tspan class="d" x="474.3" textLength="8" lengthAdjust="spacingAndGlyphs">0</tspan><tspan x="482.3" textLength="8" lengthAdjust="spacingAndGlyphs">.</tspan><tspan class="d" x="490.3" textLength="16" lengthAdjust="spacingAndGlyphs">00</tspan></text>
<text class="m" y="131.9" fill="#b4b4b4"><tspan x="466.3" textLength="8" lengthAdjust="spacingAndGlyphs">3</tspan><tspan class="d" x="474.3" textLength="8" lengthAdjust="spacingAndGlyphs">0</tspan><tspan x="482.3" textLength="8" lengthAdjust="spacingAndGlyphs">.</tspan><tspan class="d" x="490.3" textLength="16" lengthAdjust="spacingAndGlyphs">00</tspan></text>
<text class="m" y="159.9" fill="#b4b4b4"><tspan x="466.3" textLength="8" lengthAdjust="spacingAndGlyphs">2</tspan><tspan class="d" x="474.3" textLength="8" lengthAdjust="spacingAndGlyphs">0</tspan><tspan x="482.3" textLength="8" lengthAdjust="spacingAndGlyphs">.</tspan><tspan class="d" x="490.3" textLength="16" lengthAdjust="spacingAndGlyphs">00</tspan></text>
<text class="m" y="187.9" fill="#b4b4b4"><tspan x="466.3" textLength="8" lengthAdjust="spacingAndGlyphs">1</tspan><tspan class="d" x="474.3" textLength="8" lengthAdjust="spacingAndGlyphs">0</tspan><tspan x="482.3" textLength="8" lengthAdjust="spacingAndGlyphs">.</tspan><tspan class="d" x="490.3" textLength="16" lengthAdjust="spacingAndGlyphs">00</tspan></text>
<text class="m" y="215.9" fill="#00ffff"><tspan class="d" x="466.3" textLength="8" lengthAdjust="spacingAndGlyphs">0</tspan><tspan x="474.3" textLength="8" lengthAdjust="spacingAndGlyphs">.</tspan><tspan class="d" x="482.3" textLength="24" lengthAdjust="spacingAndGlyphs">000</tspan></text>
<text class="m" y="243.9" fill="#b4b4b4"><tspan x="456.4" textLength="11.4" lengthAdjust="spacingAndGlyphs">-</tspan><tspan x="466.3" textLength="8" lengthAdjust="spacingAndGlyphs">1</tspan><tspan class="d" x="474.3" textLength="8" lengthAdjust="spacingAndGlyphs">0</tspan><tspan x="482.3" textLength="8" lengthAdjust="spacingAndGlyphs">.</tspan><tspan class="d" x="490.3" textLength="16" lengthAdjust="spacingAndGlyphs">00</tspan></text>
<text class="m" y="271.9" fill="#b4b4b4"><tspan x="456.4" textLength="11.4" lengthAdjust="spacingAndGlyphs">-</tspan><tspan x="466.3" textLength="8" lengthAdjust="spacingAndGlyphs">2</tspan><tspan class="d" x="474.3" textLength="8" lengthAdjust="spacingAndGlyphs">0</tspan><tspan x="482.3" textLength="8" lengthAdjust="spacingAndGlyphs">.</tspan><tspan class="d" x="490.3" textLength="16" lengthAdjust="spacingAndGlyphs">00</tspan></text>
<text class="m" y="299.9" fill="#b4b4b4"><tspan x="456.4" textLength="11.4" lengthAdjust="spacingAndGlyphs">-</tspan><tspan x="466.3" textLength="8" lengthAdjust="spacingAndGlyphs">3</tspan><tspan class="d" x="474.3" textLength="8" lengthAdjust="spacingAndGlyphs">0</tspan><tspan x="482.3" textLength="8" lengthAdjust="spacingAndGlyphs">.</tspan><tspan class="d" x="490.3" textLength="16" lengthAdjust="spacingAndGlyphs">00</tspan></text>
<text class="m" y="327.9" fill="#b4b4b4"><tspan x="456.4" textLength="11.4" lengthAdjust="spacingAndGlyphs">-</tspan><tspan x="466.3" textLength="8" lengthAdjust="spacingAndGlyphs">4</tspan><tspan class="d" x="474.3" textLength="8" lengthAdjust="spacingAndGlyphs">0</tspan><tspan x="482.3" textLength="8" lengthAdjust="spacingAndGlyphs">.</tspan><tspan class="d" x="490.3" textLength="16" lengthAdjust="spacingAndGlyphs">00</tspan></text>
<text class="m" y="356.9" fill="#b4b4b4"><tspan x="456.4" textLength="11.4" lengthAdjust="spacingAndGlyphs">-</tspan><tspan x="466.3" textLength="8" lengthAdjust="spacingAndGlyphs">5</tspan><tspan class="d" x="474.3" textLength="8" lengthAdjust="spacingAndGlyphs">0</tspan><tspan x="482.3" textLength="8" lengthAdjust="spacingAndGlyphs">.</tspan><tspan class="d" x="490.3" textLength="16" lengthAdjust="spacingAndGlyphs">00</tspan></text>
<text class="m" y="84.3" fill="#00ffff"><tspan x="527.6" textLength="32" lengthAdjust="spacingAndGlyphs">1  1</tspan><tspan class="d" x="559.6" textLength="16" lengthAdjust="spacingAndGlyphs">00</tspan><tspan x="575.6" textLength="8" lengthAdjust="spacingAndGlyphs">.</tspan><tspan class="d" x="583.6" textLength="40" lengthAdjust="spacingAndGlyphs">00000</tspan> <tspan x="631.6" textLength="0" lengthAdjust="spacingAndGlyphs"></tspan><tspan class="u" x="631.6" textLength="16" lengthAdjust="spacingAndGlyphs">MH</tspan><tspan x="647.6" textLength="8" lengthAdjust="spacingAndGlyphs">z</tspan> <tspan x="661.7" textLength="11.4" lengthAdjust="spacingAndGlyphs">-</tspan><tspan class="d" x="671.6" textLength="8" lengthAdjust="spacingAndGlyphs">0</tspan><tspan x="679.6" textLength="8" lengthAdjust="spacingAndGlyphs">.</tspan><tspan class="d" x="687.6" textLength="8" lengthAdjust="spacingAndGlyphs">0</tspan><tspan x="695.6" textLength="40" lengthAdjust="spacingAndGlyphs">289 d</tspan><tspan class="u" x="735.6" textLength="8" lengthAdjust="spacingAndGlyphs">B</tspan></text>
<text class="m" y="97.3" fill="#00ffff"><tspan x="527.6" textLength="32" lengthAdjust="spacingAndGlyphs">2  5</tspan><tspan class="d" x="559.6" textLength="16" lengthAdjust="spacingAndGlyphs">00</tspan><tspan x="575.6" textLength="8" lengthAdjust="spacingAndGlyphs">.</tspan><tspan class="d" x="583.6" textLength="40" lengthAdjust="spacingAndGlyphs">00000</tspan> <tspan x="631.6" textLength="0" lengthAdjust="spacingAndGlyphs"></tspan><tspan class="u" x="631.6" textLength="16" lengthAdjust="spacingAndGlyphs">MH</tspan><tspan x="647.6" textLength="8" lengthAdjust="spacingAndGlyphs">z</tspan> <tspan x="661.7" textLength="11.4" lengthAdjust="spacingAndGlyphs">-</tspan><tspan class="d" x="671.6" textLength="8" lengthAdjust="spacingAndGlyphs">0</tspan><tspan x="679.6" textLength="56" lengthAdjust="spacingAndGlyphs">.1761 d</tspan><tspan class="u" x="735.6" textLength="8" lengthAdjust="spacingAndGlyphs">B</tspan></text>
<text class="m" y="110.3" fill="#00ffff"><tspan x="527.6" textLength="40" lengthAdjust="spacingAndGlyphs">3  1.</tspan><tspan class="d" x="567.6" textLength="56" lengthAdjust="spacingAndGlyphs">0000000</tspan> <tspan x="631.6" textLength="0" lengthAdjust="spacingAndGlyphs"></tspan><tspan class="u" x="631.6" textLength="16" lengthAdjust="spacingAndGlyphs">GH</tspan><tspan x="647.6" textLength="8" lengthAdjust="spacingAndGlyphs">z</tspan> <tspan x="661.7" textLength="11.4" lengthAdjust="spacingAndGlyphs">-</tspan><tspan class="d" x="671.6" textLength="8" lengthAdjust="spacingAndGlyphs">0</tspan><tspan x="679.6" textLength="56" lengthAdjust="spacingAndGlyphs">.5923 d</tspan><tspan class="u" x="735.6" textLength="8" lengthAdjust="spacingAndGlyphs">B</tspan></text>
<text class="m" y="123.3" fill="#00ffff"><tspan x="527.6" textLength="48" lengthAdjust="spacingAndGlyphs">4  2.5</tspan><tspan class="d" x="575.6" textLength="48" lengthAdjust="spacingAndGlyphs">000000</tspan> <tspan x="631.6" textLength="0" lengthAdjust="spacingAndGlyphs"></tspan><tspan class="u" x="631.6" textLength="16" lengthAdjust="spacingAndGlyphs">GH</tspan><tspan x="647.6" textLength="8" lengthAdjust="spacingAndGlyphs">z</tspan> <tspan x="661.7" textLength="11.4" lengthAdjust="spacingAndGlyphs">-</tspan><tspan x="671.6" textLength="32" lengthAdjust="spacingAndGlyphs">3.47</tspan><tspan class="d" x="703.6" textLength="8" lengthAdjust="spacingAndGlyphs">0</tspan><tspan x="711.6" textLength="24" lengthAdjust="spacingAndGlyphs">4 d</tspan><tspan class="u" x="735.6" textLength="8" lengthAdjust="spacingAndGlyphs">B</tspan></text>
<text class="m" y="136.3" fill="#00ffff"><tspan x="527.6" textLength="40" lengthAdjust="spacingAndGlyphs">5  5.</tspan><tspan class="d" x="567.6" textLength="56" lengthAdjust="spacingAndGlyphs">0000000</tspan> <tspan x="631.6" textLength="0" lengthAdjust="spacingAndGlyphs"></tspan><tspan class="u" x="631.6" textLength="16" lengthAdjust="spacingAndGlyphs">GH</tspan><tspan x="647.6" textLength="8" lengthAdjust="spacingAndGlyphs">z</tspan> <tspan x="661.7" textLength="11.4" lengthAdjust="spacingAndGlyphs">-</tspan><tspan x="671.6" textLength="24" lengthAdjust="spacingAndGlyphs">21.</tspan><tspan class="d" x="695.6" textLength="8" lengthAdjust="spacingAndGlyphs">0</tspan><tspan x="703.6" textLength="32" lengthAdjust="spacingAndGlyphs">89 d</tspan><tspan class="u" x="735.6" textLength="8" lengthAdjust="spacingAndGlyphs">B</tspan></text>
<text class="m" y="149.3" fill="#00ffff"><tspan x="527.6" textLength="32" lengthAdjust="spacingAndGlyphs">6  1</tspan><tspan class="d" x="559.6" textLength="8" lengthAdjust="spacingAndGlyphs">0</tspan><tspan x="567.6" textLength="8" lengthAdjust="spacingAndGlyphs">.</tspan><tspan class="d" x="575.6" textLength="48" lengthAdjust="spacingAndGlyphs">000000</tspan> <tspan x="631.6" textLength="0" lengthAdjust="spacingAndGlyphs"></tspan><tspan class="u" x="631.6" textLength="16" lengthAdjust="spacingAndGlyphs">GH</tspan><tspan x="647.6" textLength="8" lengthAdjust="spacingAndGlyphs">z</tspan> <tspan x="661.7" textLength="11.4" lengthAdjust="spacingAndGlyphs">-</tspan><tspan x="671.6" textLength="64" lengthAdjust="spacingAndGlyphs">3.5948 d</tspan><tspan class="u" x="735.6" textLength="8" lengthAdjust="spacingAndGlyphs">B</tspan></text>
<text class="m" y="162.3" fill="#00ffff"><tspan x="527.6" textLength="32" lengthAdjust="spacingAndGlyphs">7  2</tspan><tspan class="d" x="559.6" textLength="8" lengthAdjust="spacingAndGlyphs">0</tspan><tspan x="567.6" textLength="8" lengthAdjust="spacingAndGlyphs">.</tspan><tspan class="d" x="575.6" textLength="48" lengthAdjust="spacingAndGlyphs">000000</tspan> <tspan x="631.6" textLength="0" lengthAdjust="spacingAndGlyphs"></tspan><tspan class="u" x="631.6" textLength="16" lengthAdjust="spacingAndGlyphs">GH</tspan><tspan x="647.6" textLength="8" lengthAdjust="spacingAndGlyphs">z</tspan> <tspan x="661.7" textLength="11.4" lengthAdjust="spacingAndGlyphs">-</tspan><tspan class="d" x="671.6" textLength="8" lengthAdjust="spacingAndGlyphs">0</tspan><tspan x="679.6" textLength="24" lengthAdjust="spacingAndGlyphs">.39</tspan><tspan class="d" x="703.6" textLength="8" lengthAdjust="spacingAndGlyphs">0</tspan><tspan x="711.6" textLength="24" lengthAdjust="spacingAndGlyphs">5 d</tspan><tspan class="u" x="735.6" textLength="8" lengthAdjust="spacingAndGlyphs">B</tspan></text>
<text class="m" y="175.3" fill="#00ffff"><tspan x="519.6" textLength="96" lengthAdjust="spacingAndGlyphs">&gt;8  5.412187</tspan><tspan class="d" x="615.6" textLength="8" lengthAdjust="spacingAndGlyphs">0</tspan> <tspan x="631.6" textLength="0" lengthAdjust="spacingAndGlyphs"></tspan><tspan class="u" x="631.6" textLength="16" lengthAdjust="spacingAndGlyphs">GH</tspan><tspan x="647.6" textLength="8" lengthAdjust="spacingAndGlyphs">z</tspan> <tspan x="661.7" textLength="11.4" lengthAdjust="spacingAndGlyphs">-</tspan><tspan x="671.6" textLength="40" lengthAdjust="spacingAndGlyphs">35.27</tspan><tspan class="d" x="711.6" textLength="8" lengthAdjust="spacingAndGlyphs">0</tspan> <tspan x="727.6" textLength="8" lengthAdjust="spacingAndGlyphs">d</tspan><tspan class="u" x="735.6" textLength="8" lengthAdjust="spacingAndGlyphs">B</tspan></text>
<polyline points="517.5,212.9 517.3,212.9 517.1,213.0 517.0,213.0 517.5,213.1 518.7,213.2 520.4,213.2 522.4,213.3 524.5,213.5 526.5,213.7 528.6,213.9 530.9,214.2 533.5,214.7 536.6,215.4 540.0,216.3 543.5,217.3 547.0,218.3 550.4,219.3 553.9,220.4 557.3,221.5 560.5,222.8 563.5,224.2 566.2,225.8 568.9,227.5 571.5,229.2 574.0,230.8 576.5,232.5 578.8,234.1 581.0,235.8 583.0,237.4 584.9,239.0 586.7,240.6 588.5,242.4 590.2,244.4 591.9,246.5 593.5,248.7 595.0,250.9 596.4,253.0 597.7,255.1 598.9,257.2 600.0,259.3 601.0,261.5 601.8,263.8 602.6,266.0 603.2,267.8 603.6,269.1 603.9,270.1 604.2,271.1 604.5,272.3 605.0,273.9 605.5,275.7 606.0,277.5 606.5,279.3 606.8,280.8 607.1,282.2 607.4,283.8 607.7,285.7 608.1,288.2 608.6,291.1 609.1,294.1 609.6,297.0 610.0,299.8 610.4,302.6 610.7,305.1 611.0,307.3 611.2,309.2 611.2,310.8 611.3,311.9 611.5,312.1 611.9,311.4 612.4,309.9 613.0,307.8 613.5,305.3 613.9,302.3 614.3,298.8 614.7,295.0 615.2,291.3 615.7,287.6 616.2,283.8 616.8,279.9 617.6,276.3 618.6,272.8 619.7,269.5 620.9,266.2 622.4,263.1 624.1,260.1 625.9,257.2 627.9,254.4 630.0,251.8 632.2,249.3 634.4,246.8 636.8,244.5 639.3,242.4 641.9,240.5 644.7,238.8 647.6,237.3 650.6,235.8 653.8,234.4 657.2,233.0 660.6,231.7 664.0,230.6 667.2,229.7 670.4,228.9 673.6,228.2 677.0,227.4 680.7,226.4 684.7,225.2 688.6,224.1 692.5,223.1 696.1,222.4 699.6,221.9 703.1,221.4 707.0,220.8 711.4,220.1 716.0,219.3 720.8,218.6 725.6,217.9 730.3,217.3 735.0,216.9 739.8,216.5 744.5,216.1 749.2,215.8 753.9,215.6 758.6,215.5 763.3,215.3 767.6,215.1 771.8,215.0 776.3,214.9 782.0,214.8 789.9,214.7 799.5,214.7 808.5,214.7 815.0,214.8 817.8,215.0 818.3,215.3 817.9,215.6 818.0,215.8 818.9,215.9 820.0,215.9 821.0,215.9 822.0,215.8 822.8,215.6 823.6,215.4 824.4,215.1 825.5,214.8 826.6,214.5 827.8,214.2 829.5,214.0 832.0,213.8 836.0,213.7 841.2,213.7 846.2,213.7 850.0,213.8 851.7,214.0 852.2,214.3 852.4,214.6 853.6,214.8 856.3,214.9 859.8,214.9 863.3,214.9 866.0,214.8 867.6,214.7 868.5,214.4 869.1,214.2 869.5,214.1" fill="none" stroke="#00ffff" stroke-width="1" shape-rendering="crispEdges"/>
<polygon points="509,204.5 517,212.5 509,220.5" fill="#00ffff"/>
<polygon points="878,204.5 870,212.5 878,220.5" fill="#00ffff"/>
<use href="#mu" x="517" y="212" fill="#00ffff"/>
<text class="m" y="236" fill="#00ffff"><tspan x="513.2" textLength="8" lengthAdjust="spacingAndGlyphs">1</tspan></text>
<use href="#mu" x="524" y="212" fill="#00ffff"/>
<text class="m" y="236" fill="#00ffff"><tspan x="520.8" textLength="8" lengthAdjust="spacingAndGlyphs">2</tspan></text>
<use href="#mu" x="533" y="214" fill="#00ffff"/>
<text class="m" y="238" fill="#00ffff"><tspan x="529.9" textLength="8" lengthAdjust="spacingAndGlyphs">3</tspan></text>
<use href="#mu" x="560" y="222" fill="#00ffff"/>
<text class="m" y="246" fill="#00ffff"><tspan x="556.2" textLength="8" lengthAdjust="spacingAndGlyphs">4</tspan></text>
<use href="#mu" x="604" y="271" fill="#00ffff"/>
<text class="m" y="295" fill="#00ffff"><tspan x="601.1" textLength="8" lengthAdjust="spacingAndGlyphs">5</tspan></text>
<use href="#mu" x="692" y="222" fill="#00ffff"/>
<text class="m" y="246" fill="#00ffff"><tspan x="689.2" textLength="8" lengthAdjust="spacingAndGlyphs">6</tspan></text>
<use href="#mu" x="869" y="213" fill="#00ffff"/>
<text class="m" y="237" fill="#00ffff"><tspan x="865.8" textLength="8" lengthAdjust="spacingAndGlyphs">7</tspan></text>
<use href="#md" x="611" y="311" fill="#00ffff"/>
<text class="m" y="295.9" fill="#00ffff"><tspan x="607.9" textLength="8" lengthAdjust="spacingAndGlyphs">8</tspan></text>
<polygon points="510.5,361.5 517.5,354.5 524.5,361.5" fill="none" stroke="#00ffff" stroke-width="1" shape-rendering="crispEdges"/>
<polygon points="517.5,361.5 524.5,354.5 531.5,361.5" fill="none" stroke="#00ffff" stroke-width="1" shape-rendering="crispEdges"/>
<polygon points="526.5,361.5 533.5,354.5 540.5,361.5" fill="none" stroke="#00ffff" stroke-width="1" shape-rendering="crispEdges"/>
<polygon points="553.5,361.5 560.5,354.5 567.5,361.5" fill="none" stroke="#00ffff" stroke-width="1" shape-rendering="crispEdges"/>
<polygon points="597.5,361.5 604.5,354.5 611.5,361.5" fill="none" stroke="#00ffff" stroke-width="1" shape-rendering="crispEdges"/>
<polygon points="685.5,361.5 692.5,354.5 699.5,361.5" fill="none" stroke="#00ffff" stroke-width="1" shape-rendering="crispEdges"/>
<polygon points="862.5,361.5 869.5,354.5 876.5,361.5" fill="none" stroke="#00ffff" stroke-width="1" shape-rendering="crispEdges"/>
<polygon points="604.5,361.5 611.5,354.5 618.5,361.5" fill="#00ffff" stroke="#00ffff" stroke-width="1" shape-rendering="crispEdges"/>
<text class="m" y="376.3" fill="#ff00ff"><tspan class="u" x="15" textLength="8" lengthAdjust="spacingAndGlyphs">T</tspan><tspan x="23" textLength="16" lengthAdjust="spacingAndGlyphs">r3</tspan> <tspan class="u" x="47" textLength="8" lengthAdjust="spacingAndGlyphs">S</tspan><tspan x="55" textLength="16" lengthAdjust="spacingAndGlyphs">33</tspan> <tspan class="u" x="79" textLength="8" lengthAdjust="spacingAndGlyphs">S</tspan><tspan x="87" textLength="48" lengthAdjust="spacingAndGlyphs">mith (</tspan><tspan class="u" x="135" textLength="8" lengthAdjust="spacingAndGlyphs">R</tspan><tspan x="143" textLength="16" lengthAdjust="spacingAndGlyphs">+j</tspan><tspan class="u" x="159" textLength="8" lengthAdjust="spacingAndGlyphs">X</tspan><tspan x="167" textLength="8" lengthAdjust="spacingAndGlyphs">)</tspan> <tspan class="u" x="183" textLength="8" lengthAdjust="spacingAndGlyphs">S</tspan><tspan x="191" textLength="56" lengthAdjust="spacingAndGlyphs">cale 1.</tspan><tspan class="d" x="247" textLength="24" lengthAdjust="spacingAndGlyphs">000</tspan><tspan class="u" x="271" textLength="8" lengthAdjust="spacingAndGlyphs">U</tspan> <tspan x="287" textLength="8" lengthAdjust="spacingAndGlyphs">[</tspan><tspan class="u" x="295" textLength="8" lengthAdjust="spacingAndGlyphs">F</tspan><tspan x="303" textLength="16" lengthAdjust="spacingAndGlyphs">2]</tspan></text>
<clipPath id="sc"><circle cx="222.0" cy="531.0" r="141.5"/></clipPath>
<g clip-path="url(#sc)" fill="none" stroke="#404040" stroke-width="1" shape-rendering="crispEdges">
<circle cx="245.58" cy="531.0" r="117.92"/>
<circle cx="269.17" cy="531.0" r="94.33"/>
<circle cx="292.75" cy="531.0" r="70.75"/>
<circle cx="316.33" cy="531.0" r="47.17"/>
<circle cx="339.92" cy="531.0" r="23.58"/>
<circle cx="363.50" cy="493.09" r="37.91"/>
<circle cx="363.50" cy="568.91" r="37.91"/>
<circle cx="363.50" cy="449.30" r="81.70"/>
<circle cx="363.50" cy="612.70" r="81.70"/>
<circle cx="363.50" cy="389.50" r="141.50"/>
<circle cx="363.50" cy="672.50" r="141.50"/>
<circle cx="363.50" cy="285.91" r="245.09"/>
<circle cx="363.50" cy="776.09" r="245.09"/>
<circle cx="363.50" cy="2.91" r="528.09"/>
<circle cx="363.50" cy="1059.09" r="528.09"/>
</g>
<circle cx="222.0" cy="531.0" r="141.5" fill="none" stroke="#a4a4a4" stroke-width="1" shape-rendering="crispEdges"/>
<rect x="80" y="531" width="284" height="1" fill="#a4a4a4"/>
<polyline points="222.2,530.0 222.2,529.3 222.3,528.3 222.4,527.2 222.5,526.0 222.6,525.0 222.7,524.1 222.9,522.9 223.3,521.0 224.0,518.1 224.9,514.4 226.0,510.6 227.0,507.2 228.0,504.4 229.0,501.9 230.1,499.5 231.5,497.0 233.4,494.3 235.7,491.5 238.0,488.8 240.0,486.5 241.5,484.7 242.6,483.2 243.7,481.9 245.0,480.5 246.5,479.1 248.0,477.8 249.8,476.4 252.0,475.0 254.8,473.4 257.9,471.7 261.4,470.0 265.3,468.5 269.6,467.2 274.4,466.0 279.3,465.0 284.0,464.3 288.4,463.8 292.7,463.6 297.1,463.7 301.7,464.4 306.6,466.0 311.9,468.2 317.1,470.7 321.8,473.0 326.0,475.0 329.7,476.9 333.3,479.0 336.8,481.4 340.4,484.3 343.9,487.5 347.1,490.9 350.0,494.6 352.4,498.5 354.3,502.6 356.0,506.9 357.5,511.5 358.8,516.5 360.0,521.9 360.9,527.2 361.5,532.0 361.8,536.1 361.8,539.8 361.6,543.3 361.3,546.8 360.8,550.5 360.2,554.2 359.4,557.9 358.5,561.4 357.5,564.8 356.5,568.2 355.2,571.5 353.8,574.6 352.1,577.6 350.3,580.4 348.3,583.2 346.2,585.9 344.0,588.6 341.7,591.2 339.3,593.8 336.8,596.2 334.2,598.5 331.4,600.6 328.5,602.7 325.5,604.7 322.4,606.7 319.1,608.7 315.7,610.6 312.4,612.2 309.1,613.6 305.8,614.7 302.5,615.7 299.2,616.4 295.9,616.9 292.6,617.3 289.3,617.4 285.8,617.4 282.2,617.2 278.3,616.9 274.5,616.4 270.9,615.6 267.5,614.6 264.1,613.4 260.9,611.9 257.8,610.4 254.8,608.7 251.9,606.9 249.1,604.9 246.5,602.8 244.0,600.6 241.7,598.3 239.4,595.9 237.1,593.4 234.7,590.8 232.3,588.2 230.0,585.6 227.6,583.1 225.2,580.8 222.8,578.7 220.5,576.6 218.2,574.6 215.9,572.7 213.7,570.9 211.6,569.1 209.8,567.1 208.3,564.9 207.1,562.6 206.0,560.1 205.1,557.6 204.3,554.9 203.7,552.0 203.2,549.1 202.8,546.4 202.4,543.8 202.1,541.4 201.9,539.0 201.9,536.9 202.2,535.0 202.7,533.2 203.3,531.7 204.1,530.4 205.1,529.4 206.2,528.5 207.5,527.9 208.8,527.5 210.2,527.2 211.6,527.2 213.1,527.3 214.5,527.5 216.0,528.0 217.7,528.6 219.1,529.3 220.1,529.8 222.6,527.0 223.5,521.5 252.8,507.7" fill="none" stroke="#ff00ff" stroke-width="1" shape-rendering="crispEdges"/>
<text class="m" y="402" fill="#ff00ff"><tspan x="26.8" textLength="32" lengthAdjust="spacingAndGlyphs">1  1</tspan><tspan class="d" x="58.8" textLength="16" lengthAdjust="spacingAndGlyphs">00</tspan><tspan x="74.8" textLength="8" lengthAdjust="spacingAndGlyphs">.</tspan><tspan class="d" x="82.8" textLength="40" lengthAdjust="spacingAndGlyphs">00000</tspan> <tspan x="130.8" textLength="0" lengthAdjust="spacingAndGlyphs"></tspan><tspan class="u" x="130.8" textLength="16" lengthAdjust="spacingAndGlyphs">MH</tspan><tspan x="146.8" textLength="32" lengthAdjust="spacingAndGlyphs">z  5</tspan><tspan class="d" x="178.8" textLength="8" lengthAdjust="spacingAndGlyphs">0</tspan><tspan x="186.8" textLength="32" lengthAdjust="spacingAndGlyphs">.241</tspan> <tspan class="u" x="226.8" textLength="8" lengthAdjust="spacingAndGlyphs">Ω</tspan>   <tspan x="258.8" textLength="40" lengthAdjust="spacingAndGlyphs">3.551</tspan><tspan class="d" x="298.8" textLength="8" lengthAdjust="spacingAndGlyphs">0</tspan> <tspan x="314.8" textLength="0" lengthAdjust="spacingAndGlyphs"></tspan><tspan class="u" x="314.8" textLength="8" lengthAdjust="spacingAndGlyphs">Ω</tspan>   <tspan x="346.8" textLength="64" lengthAdjust="spacingAndGlyphs">5.6516 n</tspan><tspan class="u" x="410.8" textLength="8" lengthAdjust="spacingAndGlyphs">H</tspan></text>
<text class="m" y="415" fill="#ff00ff"><tspan x="26.8" textLength="32" lengthAdjust="spacingAndGlyphs">2  5</tspan><tspan class="d" x="58.8" textLength="16" lengthAdjust="spacingAndGlyphs">00</tspan><tspan x="74.8" textLength="8" lengthAdjust="spacingAndGlyphs">.</tspan><tspan class="d" x="82.8" textLength="40" lengthAdjust="spacingAndGlyphs">00000</tspan> <tspan x="130.8" textLength="0" lengthAdjust="spacingAndGlyphs"></tspan><tspan class="u" x="130.8" textLength="16" lengthAdjust="spacingAndGlyphs">MH</tspan><tspan x="146.8" textLength="32" lengthAdjust="spacingAndGlyphs">z  5</tspan><tspan class="d" x="178.8" textLength="8" lengthAdjust="spacingAndGlyphs">0</tspan><tspan x="186.8" textLength="32" lengthAdjust="spacingAndGlyphs">.636</tspan> <tspan class="u" x="226.8" textLength="8" lengthAdjust="spacingAndGlyphs">Ω</tspan>   <tspan x="258.8" textLength="40" lengthAdjust="spacingAndGlyphs">17.56</tspan><tspan class="d" x="298.8" textLength="8" lengthAdjust="spacingAndGlyphs">0</tspan> <tspan x="314.8" textLength="0" lengthAdjust="spacingAndGlyphs"></tspan><tspan class="u" x="314.8" textLength="8" lengthAdjust="spacingAndGlyphs">Ω</tspan>   <tspan x="346.8" textLength="64" lengthAdjust="spacingAndGlyphs">5.5894 n</tspan><tspan class="u" x="410.8" textLength="8" lengthAdjust="spacingAndGlyphs">H</tspan></text>
<text class="m" y="428" fill="#ff00ff"><tspan x="26.8" textLength="40" lengthAdjust="spacingAndGlyphs">3  1.</tspan><tspan class="d" x="66.8" textLength="56" lengthAdjust="spacingAndGlyphs">0000000</tspan> <tspan x="130.8" textLength="0" lengthAdjust="spacingAndGlyphs"></tspan><tspan class="u" x="130.8" textLength="16" lengthAdjust="spacingAndGlyphs">GH</tspan><tspan x="146.8" textLength="72" lengthAdjust="spacingAndGlyphs">z  51.431</tspan> <tspan class="u" x="226.8" textLength="8" lengthAdjust="spacingAndGlyphs">Ω</tspan>   <tspan x="258.8" textLength="48" lengthAdjust="spacingAndGlyphs">36.536</tspan> <tspan class="u" x="314.8" textLength="8" lengthAdjust="spacingAndGlyphs">Ω</tspan>   <tspan x="346.8" textLength="64" lengthAdjust="spacingAndGlyphs">5.8149 n</tspan><tspan class="u" x="410.8" textLength="8" lengthAdjust="spacingAndGlyphs">H</tspan></text>
<text class="m" y="441" fill="#ff00ff"><tspan x="26.8" textLength="48" lengthAdjust="spacingAndGlyphs">4  2.5</tspan><tspan class="d" x="74.8" textLength="48" lengthAdjust="spacingAndGlyphs">000000</tspan> <tspan x="130.8" textLength="0" lengthAdjust="spacingAndGlyphs"></tspan><tspan class="u" x="130.8" textLength="16" lengthAdjust="spacingAndGlyphs">GH</tspan><tspan x="146.8" textLength="72" lengthAdjust="spacingAndGlyphs">z  55.961</tspan> <tspan class="u" x="226.8" textLength="8" lengthAdjust="spacingAndGlyphs">Ω</tspan>   <tspan x="258.8" textLength="40" lengthAdjust="spacingAndGlyphs">114.1</tspan><tspan class="d" x="298.8" textLength="8" lengthAdjust="spacingAndGlyphs">0</tspan> <tspan x="314.8" textLength="0" lengthAdjust="spacingAndGlyphs"></tspan><tspan class="u" x="314.8" textLength="8" lengthAdjust="spacingAndGlyphs">Ω</tspan>   <tspan x="346.8" textLength="40" lengthAdjust="spacingAndGlyphs">7.264</tspan><tspan class="d" x="386.8" textLength="8" lengthAdjust="spacingAndGlyphs">0</tspan> <tspan x="402.8" textLength="8" lengthAdjust="spacingAndGlyphs">n</tspan><tspan class="u" x="410.8" textLength="8" lengthAdjust="spacingAndGlyphs">H</tspan></text>
<text class="m" y="454" fill="#ff00ff"><tspan x="26.8" textLength="40" lengthAdjust="spacingAndGlyphs">5  5.</tspan><tspan class="d" x="66.8" textLength="56" lengthAdjust="spacingAndGlyphs">0000000</tspan> <tspan x="130.8" textLength="0" lengthAdjust="spacingAndGlyphs"></tspan><tspan class="u" x="130.8" textLength="16" lengthAdjust="spacingAndGlyphs">GH</tspan><tspan x="146.8" textLength="88" lengthAdjust="spacingAndGlyphs">z  5.5443 k</tspan><tspan class="u" x="234.8" textLength="8" lengthAdjust="spacingAndGlyphs">Ω</tspan> <tspan x="250.8" textLength="0" lengthAdjust="spacingAndGlyphs"></tspan><tspan x="248.9" textLength="11.4" lengthAdjust="spacingAndGlyphs">-</tspan><tspan x="258.8" textLength="64" lengthAdjust="spacingAndGlyphs">2.8652 k</tspan><tspan class="u" x="322.8" textLength="8" lengthAdjust="spacingAndGlyphs">Ω</tspan>  <tspan x="346.8" textLength="32" lengthAdjust="spacingAndGlyphs">11.1</tspan><tspan class="d" x="378.8" textLength="8" lengthAdjust="spacingAndGlyphs">0</tspan><tspan x="386.8" textLength="24" lengthAdjust="spacingAndGlyphs">9 f</tspan><tspan class="u" x="410.8" textLength="8" lengthAdjust="spacingAndGlyphs">F</tspan></text>
<text class="m" y="467" fill="#ff00ff"><tspan x="26.8" textLength="32" lengthAdjust="spacingAndGlyphs">6  1</tspan><tspan class="d" x="58.8" textLength="8" lengthAdjust="spacingAndGlyphs">0</tspan><tspan x="66.8" textLength="8" lengthAdjust="spacingAndGlyphs">.</tspan><tspan class="d" x="74.8" textLength="48" lengthAdjust="spacingAndGlyphs">000000</tspan> <tspan x="130.8" textLength="0" lengthAdjust="spacingAndGlyphs"></tspan><tspan class="u" x="130.8" textLength="16" lengthAdjust="spacingAndGlyphs">GH</tspan><tspan x="146.8" textLength="56" lengthAdjust="spacingAndGlyphs">z  31.4</tspan><tspan class="d" x="202.8" textLength="8" lengthAdjust="spacingAndGlyphs">0</tspan><tspan x="210.8" textLength="8" lengthAdjust="spacingAndGlyphs">4</tspan> <tspan class="u" x="226.8" textLength="8" lengthAdjust="spacingAndGlyphs">Ω</tspan>  <tspan x="250.8" textLength="0" lengthAdjust="spacingAndGlyphs"></tspan><tspan x="248.9" textLength="11.4" lengthAdjust="spacingAndGlyphs">-</tspan><tspan x="258.8" textLength="8" lengthAdjust="spacingAndGlyphs">9</tspan><tspan class="d" x="266.8" textLength="8" lengthAdjust="spacingAndGlyphs">0</tspan><tspan x="274.8" textLength="32" lengthAdjust="spacingAndGlyphs">.573</tspan> <tspan class="u" x="314.8" textLength="8" lengthAdjust="spacingAndGlyphs">Ω</tspan>   <tspan x="346.8" textLength="64" lengthAdjust="spacingAndGlyphs">175.72 f</tspan><tspan class="u" x="410.8" textLength="8" lengthAdjust="spacingAndGlyphs">F</tspan></text>
<text class="m" y="480" fill="#ff00ff"><tspan x="26.8" textLength="32" lengthAdjust="spacingAndGlyphs">7  2</tspan><tspan class="d" x="58.8" textLength="8" lengthAdjust="spacingAndGlyphs">0</tspan><tspan x="66.8" textLength="8" lengthAdjust="spacingAndGlyphs">.</tspan><tspan class="d" x="74.8" textLength="48" lengthAdjust="spacingAndGlyphs">000000</tspan> <tspan x="130.8" textLength="0" lengthAdjust="spacingAndGlyphs"></tspan><tspan class="u" x="130.8" textLength="16" lengthAdjust="spacingAndGlyphs">GH</tspan><tspan x="146.8" textLength="72" lengthAdjust="spacingAndGlyphs">z  72.398</tspan> <tspan class="u" x="226.8" textLength="8" lengthAdjust="spacingAndGlyphs">Ω</tspan>   <tspan x="258.8" textLength="48" lengthAdjust="spacingAndGlyphs">25.772</tspan> <tspan class="u" x="314.8" textLength="8" lengthAdjust="spacingAndGlyphs">Ω</tspan>   <tspan x="346.8" textLength="8" lengthAdjust="spacingAndGlyphs">2</tspan><tspan class="d" x="354.8" textLength="8" lengthAdjust="spacingAndGlyphs">0</tspan><tspan x="362.8" textLength="16" lengthAdjust="spacingAndGlyphs">5.</tspan><tspan class="d" x="378.8" textLength="8" lengthAdjust="spacingAndGlyphs">0</tspan><tspan x="386.8" textLength="24" lengthAdjust="spacingAndGlyphs">9 p</tspan><tspan class="u" x="410.8" textLength="8" lengthAdjust="spacingAndGlyphs">H</tspan></text>
<text class="m" y="493" fill="#ff00ff"><tspan x="18.8" textLength="96" lengthAdjust="spacingAndGlyphs">&gt;8  5.412187</tspan><tspan class="d" x="114.8" textLength="8" lengthAdjust="spacingAndGlyphs">0</tspan> <tspan x="130.8" textLength="0" lengthAdjust="spacingAndGlyphs"></tspan><tspan class="u" x="130.8" textLength="16" lengthAdjust="spacingAndGlyphs">GH</tspan><tspan x="146.8" textLength="72" lengthAdjust="spacingAndGlyphs">z  73.634</tspan> <tspan class="u" x="226.8" textLength="8" lengthAdjust="spacingAndGlyphs">Ω</tspan>  <tspan x="250.8" textLength="0" lengthAdjust="spacingAndGlyphs"></tspan><tspan x="248.9" textLength="11.4" lengthAdjust="spacingAndGlyphs">-</tspan><tspan x="258.8" textLength="48" lengthAdjust="spacingAndGlyphs">876.64</tspan> <tspan class="u" x="314.8" textLength="8" lengthAdjust="spacingAndGlyphs">Ω</tspan>   <tspan x="346.8" textLength="64" lengthAdjust="spacingAndGlyphs">33.545 f</tspan><tspan class="u" x="410.8" textLength="8" lengthAdjust="spacingAndGlyphs">F</tspan></text>
<use href="#mu" x="222" y="526" fill="#ff00ff"/>
<text class="m" y="550" fill="#ff00ff"><tspan x="218.2" textLength="8" lengthAdjust="spacingAndGlyphs">1</tspan></text>
<use href="#mu" x="227" y="507" fill="#ff00ff"/>
<text class="m" y="531" fill="#ff00ff"><tspan x="223.8" textLength="8" lengthAdjust="spacingAndGlyphs">2</tspan></text>
<use href="#mu" x="240" y="486" fill="#ff00ff"/>
<text class="m" y="510" fill="#ff00ff"><tspan x="236.9" textLength="8" lengthAdjust="spacingAndGlyphs">3</tspan></text>
<use href="#mu" x="301" y="464" fill="#ff00ff"/>
<text class="m" y="488" fill="#ff00ff"><tspan x="297.2" textLength="8" lengthAdjust="spacingAndGlyphs">4</tspan></text>
<use href="#mu" x="361" y="532" fill="#ff00ff"/>
<text class="m" y="556" fill="#ff00ff"><tspan x="356.9" textLength="8" lengthAdjust="spacingAndGlyphs">5</tspan></text>
<use href="#mu" x="285" y="617" fill="#ff00ff"/>
<text class="m" y="641" fill="#ff00ff"><tspan x="282.2" textLength="8" lengthAdjust="spacingAndGlyphs">6</tspan></text>
<use href="#mu" x="252" y="507" fill="#ff00ff"/>
<text class="m" y="531" fill="#ff00ff"><tspan x="248.8" textLength="8" lengthAdjust="spacingAndGlyphs">7</tspan></text>
<use href="#md" x="361" y="546" fill="#ff00ff"/>
<text class="m" y="530.9" fill="#ff00ff"><tspan x="356.7" textLength="8" lengthAdjust="spacingAndGlyphs">8</tspan></text>
<polygon points="9.5,680.5 16.5,673.5 23.5,680.5" fill="none" stroke="#ff00ff" stroke-width="1" shape-rendering="crispEdges"/>
<polygon points="17.5,680.5 24.5,673.5 31.5,680.5" fill="none" stroke="#ff00ff" stroke-width="1" shape-rendering="crispEdges"/>
<polygon points="28.5,680.5 35.5,673.5 42.5,680.5" fill="none" stroke="#ff00ff" stroke-width="1" shape-rendering="crispEdges"/>
<polygon points="59.5,680.5 66.5,673.5 73.5,680.5" fill="none" stroke="#ff00ff" stroke-width="1" shape-rendering="crispEdges"/>
<polygon points="111.5,680.5 118.5,673.5 125.5,680.5" fill="none" stroke="#ff00ff" stroke-width="1" shape-rendering="crispEdges"/>
<polygon points="215.5,680.5 222.5,673.5 229.5,680.5" fill="none" stroke="#ff00ff" stroke-width="1" shape-rendering="crispEdges"/>
<polygon points="424.5,680.5 431.5,673.5 438.5,680.5" fill="none" stroke="#ff00ff" stroke-width="1" shape-rendering="crispEdges"/>
<polygon points="120.5,680.5 127.5,673.5 134.5,680.5" fill="#ff00ff" stroke="#ff00ff" stroke-width="1" shape-rendering="crispEdges"/>
<rect x="552" y="390" width="1" height="283" fill="#383838"/>
<rect x="587" y="390" width="1" height="283" fill="#383838"/>
<rect x="622" y="390" width="1" height="283" fill="#383838"/>
<rect x="657" y="390" width="1" height="283" fill="#383838"/>
<rect x="693" y="390" width="1" height="283" fill="#383838"/>
<rect x="728" y="390" width="1" height="283" fill="#383838"/>
<rect x="763" y="390" width="1" height="283" fill="#383838"/>
<rect x="798" y="390" width="1" height="283" fill="#383838"/>
<rect x="833" y="390" width="1" height="283" fill="#383838"/>
<rect x="517" y="418" width="353" height="1" fill="#383838"/>
<rect x="517" y="446" width="353" height="1" fill="#383838"/>
<rect x="517" y="474" width="353" height="1" fill="#383838"/>
<rect x="517" y="502" width="353" height="1" fill="#383838"/>
<rect x="517" y="531" width="353" height="1" fill="#383838"/>
<rect x="517" y="559" width="353" height="1" fill="#383838"/>
<rect x="517" y="587" width="353" height="1" fill="#383838"/>
<rect x="517" y="615" width="353" height="1" fill="#383838"/>
<rect x="517" y="643" width="353" height="1" fill="#383838"/>
<rect x="517" y="390" width="353" height="1" fill="#9c9c9c"/>
<rect x="517" y="672" width="353" height="1" fill="#9c9c9c"/>
<rect x="517" y="390" width="1" height="283" fill="#9c9c9c"/>
<rect x="869" y="390" width="1" height="283" fill="#9c9c9c"/>
<text class="m" y="376.3" fill="#00ff00"><tspan class="u" x="453" textLength="8" lengthAdjust="spacingAndGlyphs">T</tspan><tspan x="461" textLength="16" lengthAdjust="spacingAndGlyphs">r4</tspan> <tspan class="u" x="485" textLength="8" lengthAdjust="spacingAndGlyphs">L</tspan><tspan x="493" textLength="8" lengthAdjust="spacingAndGlyphs">s</tspan> <tspan class="u" x="509" textLength="8" lengthAdjust="spacingAndGlyphs">L</tspan><tspan x="517" textLength="16" lengthAdjust="spacingAndGlyphs">in</tspan> <tspan class="u" x="541" textLength="8" lengthAdjust="spacingAndGlyphs">M</tspan><tspan x="549" textLength="32" lengthAdjust="spacingAndGlyphs">ag 1</tspan><tspan class="d" x="581" textLength="16" lengthAdjust="spacingAndGlyphs">00</tspan><tspan x="597" textLength="8" lengthAdjust="spacingAndGlyphs">.</tspan><tspan class="d" x="605" textLength="8" lengthAdjust="spacingAndGlyphs">0</tspan><tspan x="613" textLength="8" lengthAdjust="spacingAndGlyphs">m</tspan><tspan class="u" x="621" textLength="8" lengthAdjust="spacingAndGlyphs">U</tspan><tspan x="629" textLength="8" lengthAdjust="spacingAndGlyphs">/</tspan> <tspan class="u" x="645" textLength="8" lengthAdjust="spacingAndGlyphs">R</tspan><tspan x="653" textLength="16" lengthAdjust="spacingAndGlyphs">ef</tspan> <tspan class="d" x="677" textLength="8" lengthAdjust="spacingAndGlyphs">0</tspan><tspan x="685" textLength="8" lengthAdjust="spacingAndGlyphs">.</tspan><tspan class="d" x="693" textLength="24" lengthAdjust="spacingAndGlyphs">000</tspan><tspan class="u" x="717" textLength="8" lengthAdjust="spacingAndGlyphs">U</tspan> <tspan x="733" textLength="8" lengthAdjust="spacingAndGlyphs">[</tspan><tspan class="u" x="741" textLength="8" lengthAdjust="spacingAndGlyphs">F</tspan><tspan x="749" textLength="8" lengthAdjust="spacingAndGlyphs">2</tspan> <tspan class="u" x="765" textLength="8" lengthAdjust="spacingAndGlyphs">E</tspan><tspan x="773" textLength="24" lengthAdjust="spacingAndGlyphs">qu]</tspan></text>
<text class="m" y="393.9" fill="#b4b4b4"><tspan x="466.3" textLength="16" lengthAdjust="spacingAndGlyphs">1.</tspan><tspan class="d" x="482.3" textLength="24" lengthAdjust="spacingAndGlyphs">000</tspan></text>
<text class="m" y="421.9" fill="#b4b4b4"><tspan x="458.3" textLength="8" lengthAdjust="spacingAndGlyphs">9</tspan><tspan class="d" x="466.3" textLength="16" lengthAdjust="spacingAndGlyphs">00</tspan><tspan x="482.3" textLength="8" lengthAdjust="spacingAndGlyphs">.</tspan><tspan class="d" x="490.3" textLength="8" lengthAdjust="spacingAndGlyphs">0</tspan><tspan x="498.3" textLength="8" lengthAdjust="spacingAndGlyphs">m</tspan></text>
<text class="m" y="449.9" fill="#b4b4b4"><tspan x="458.3" textLength="8" lengthAdjust="spacingAndGlyphs">8</tspan><tspan class="d" x="466.3" textLength="16" lengthAdjust="spacingAndGlyphs">00</tspan><tspan x="482.3" textLength="8" lengthAdjust="spacingAndGlyphs">.</tspan><tspan class="d" x="490.3" textLength="8" lengthAdjust="spacingAndGlyphs">0</tspan><tspan x="498.3" textLength="8" lengthAdjust="spacingAndGlyphs">m</tspan></text>
<text class="m" y="477.9" fill="#b4b4b4"><tspan x="458.3" textLength="8" lengthAdjust="spacingAndGlyphs">7</tspan><tspan class="d" x="466.3" textLength="16" lengthAdjust="spacingAndGlyphs">00</tspan><tspan x="482.3" textLength="8" lengthAdjust="spacingAndGlyphs">.</tspan><tspan class="d" x="490.3" textLength="8" lengthAdjust="spacingAndGlyphs">0</tspan><tspan x="498.3" textLength="8" lengthAdjust="spacingAndGlyphs">m</tspan></text>
<text class="m" y="505.9" fill="#b4b4b4"><tspan x="458.3" textLength="8" lengthAdjust="spacingAndGlyphs">6</tspan><tspan class="d" x="466.3" textLength="16" lengthAdjust="spacingAndGlyphs">00</tspan><tspan x="482.3" textLength="8" lengthAdjust="spacingAndGlyphs">.</tspan><tspan class="d" x="490.3" textLength="8" lengthAdjust="spacingAndGlyphs">0</tspan><tspan x="498.3" textLength="8" lengthAdjust="spacingAndGlyphs">m</tspan></text>
<text class="m" y="534.9" fill="#b4b4b4"><tspan x="458.3" textLength="8" lengthAdjust="spacingAndGlyphs">5</tspan><tspan class="d" x="466.3" textLength="16" lengthAdjust="spacingAndGlyphs">00</tspan><tspan x="482.3" textLength="8" lengthAdjust="spacingAndGlyphs">.</tspan><tspan class="d" x="490.3" textLength="8" lengthAdjust="spacingAndGlyphs">0</tspan><tspan x="498.3" textLength="8" lengthAdjust="spacingAndGlyphs">m</tspan></text>
<text class="m" y="562.9" fill="#b4b4b4"><tspan x="458.3" textLength="8" lengthAdjust="spacingAndGlyphs">4</tspan><tspan class="d" x="466.3" textLength="16" lengthAdjust="spacingAndGlyphs">00</tspan><tspan x="482.3" textLength="8" lengthAdjust="spacingAndGlyphs">.</tspan><tspan class="d" x="490.3" textLength="8" lengthAdjust="spacingAndGlyphs">0</tspan><tspan x="498.3" textLength="8" lengthAdjust="spacingAndGlyphs">m</tspan></text>
<text class="m" y="590.9" fill="#b4b4b4"><tspan x="458.3" textLength="8" lengthAdjust="spacingAndGlyphs">3</tspan><tspan class="d" x="466.3" textLength="16" lengthAdjust="spacingAndGlyphs">00</tspan><tspan x="482.3" textLength="8" lengthAdjust="spacingAndGlyphs">.</tspan><tspan class="d" x="490.3" textLength="8" lengthAdjust="spacingAndGlyphs">0</tspan><tspan x="498.3" textLength="8" lengthAdjust="spacingAndGlyphs">m</tspan></text>
<text class="m" y="618.9" fill="#b4b4b4"><tspan x="458.3" textLength="8" lengthAdjust="spacingAndGlyphs">2</tspan><tspan class="d" x="466.3" textLength="16" lengthAdjust="spacingAndGlyphs">00</tspan><tspan x="482.3" textLength="8" lengthAdjust="spacingAndGlyphs">.</tspan><tspan class="d" x="490.3" textLength="8" lengthAdjust="spacingAndGlyphs">0</tspan><tspan x="498.3" textLength="8" lengthAdjust="spacingAndGlyphs">m</tspan></text>
<text class="m" y="646.9" fill="#b4b4b4"><tspan x="458.3" textLength="8" lengthAdjust="spacingAndGlyphs">1</tspan><tspan class="d" x="466.3" textLength="16" lengthAdjust="spacingAndGlyphs">00</tspan><tspan x="482.3" textLength="8" lengthAdjust="spacingAndGlyphs">.</tspan><tspan class="d" x="490.3" textLength="8" lengthAdjust="spacingAndGlyphs">0</tspan><tspan x="498.3" textLength="8" lengthAdjust="spacingAndGlyphs">m</tspan></text>
<text class="m" y="675.9" fill="#00ff00"><tspan class="d" x="466.3" textLength="8" lengthAdjust="spacingAndGlyphs">0</tspan><tspan x="474.3" textLength="8" lengthAdjust="spacingAndGlyphs">.</tspan><tspan class="d" x="482.3" textLength="24" lengthAdjust="spacingAndGlyphs">000</tspan></text>
<text class="m" y="402.3" fill="#00ff00"><tspan x="527.6" textLength="32" lengthAdjust="spacingAndGlyphs">1  1</tspan><tspan class="d" x="559.6" textLength="16" lengthAdjust="spacingAndGlyphs">00</tspan><tspan x="575.6" textLength="8" lengthAdjust="spacingAndGlyphs">.</tspan><tspan class="d" x="583.6" textLength="40" lengthAdjust="spacingAndGlyphs">00000</tspan> <tspan x="631.6" textLength="0" lengthAdjust="spacingAndGlyphs"></tspan><tspan class="u" x="631.6" textLength="16" lengthAdjust="spacingAndGlyphs">MH</tspan><tspan x="647.6" textLength="40" lengthAdjust="spacingAndGlyphs">z  6.</tspan><tspan class="d" x="687.6" textLength="8" lengthAdjust="spacingAndGlyphs">0</tspan><tspan x="695.6" textLength="40" lengthAdjust="spacingAndGlyphs">672 n</tspan><tspan class="u" x="735.6" textLength="8" lengthAdjust="spacingAndGlyphs">U</tspan></text>
<text class="m" y="415.3" fill="#00ff00"><tspan x="527.6" textLength="32" lengthAdjust="spacingAndGlyphs">2  5</tspan><tspan class="d" x="559.6" textLength="16" lengthAdjust="spacingAndGlyphs">00</tspan><tspan x="575.6" textLength="8" lengthAdjust="spacingAndGlyphs">.</tspan><tspan class="d" x="583.6" textLength="40" lengthAdjust="spacingAndGlyphs">00000</tspan> <tspan x="631.6" textLength="0" lengthAdjust="spacingAndGlyphs"></tspan><tspan class="u" x="631.6" textLength="16" lengthAdjust="spacingAndGlyphs">MH</tspan><tspan x="647.6" textLength="88" lengthAdjust="spacingAndGlyphs">z  5.9628 n</tspan><tspan class="u" x="735.6" textLength="8" lengthAdjust="spacingAndGlyphs">U</tspan></text>
<text class="m" y="428.3" fill="#00ff00"><tspan x="527.6" textLength="40" lengthAdjust="spacingAndGlyphs">3  1.</tspan><tspan class="d" x="567.6" textLength="56" lengthAdjust="spacingAndGlyphs">0000000</tspan> <tspan x="631.6" textLength="0" lengthAdjust="spacingAndGlyphs"></tspan><tspan class="u" x="631.6" textLength="16" lengthAdjust="spacingAndGlyphs">GH</tspan><tspan x="647.6" textLength="88" lengthAdjust="spacingAndGlyphs">z  6.1296 n</tspan><tspan class="u" x="735.6" textLength="8" lengthAdjust="spacingAndGlyphs">U</tspan></text>
<text class="m" y="441.3" fill="#00ff00"><tspan x="527.6" textLength="48" lengthAdjust="spacingAndGlyphs">4  2.5</tspan><tspan class="d" x="575.6" textLength="48" lengthAdjust="spacingAndGlyphs">000000</tspan> <tspan x="631.6" textLength="0" lengthAdjust="spacingAndGlyphs"></tspan><tspan class="u" x="631.6" textLength="16" lengthAdjust="spacingAndGlyphs">GH</tspan><tspan x="647.6" textLength="88" lengthAdjust="spacingAndGlyphs">z  7.2518 n</tspan><tspan class="u" x="735.6" textLength="8" lengthAdjust="spacingAndGlyphs">U</tspan></text>
<text class="m" y="454.3" fill="#00ff00"><tspan x="527.6" textLength="40" lengthAdjust="spacingAndGlyphs">5  5.</tspan><tspan class="d" x="567.6" textLength="56" lengthAdjust="spacingAndGlyphs">0000000</tspan> <tspan x="631.6" textLength="0" lengthAdjust="spacingAndGlyphs"></tspan><tspan class="u" x="631.6" textLength="16" lengthAdjust="spacingAndGlyphs">GH</tspan><tspan x="647.6" textLength="88" lengthAdjust="spacingAndGlyphs">z  35.224 n</tspan><tspan class="u" x="735.6" textLength="8" lengthAdjust="spacingAndGlyphs">U</tspan></text>
<text class="m" y="467.3" fill="#00ff00"><tspan x="527.6" textLength="32" lengthAdjust="spacingAndGlyphs">6  1</tspan><tspan class="d" x="559.6" textLength="8" lengthAdjust="spacingAndGlyphs">0</tspan><tspan x="567.6" textLength="8" lengthAdjust="spacingAndGlyphs">.</tspan><tspan class="d" x="575.6" textLength="48" lengthAdjust="spacingAndGlyphs">000000</tspan> <tspan x="631.6" textLength="0" lengthAdjust="spacingAndGlyphs"></tspan><tspan class="u" x="631.6" textLength="16" lengthAdjust="spacingAndGlyphs">GH</tspan><tspan x="647.6" textLength="56" lengthAdjust="spacingAndGlyphs">z  1.35</tspan><tspan class="d" x="703.6" textLength="16" lengthAdjust="spacingAndGlyphs">00</tspan> <tspan x="727.6" textLength="8" lengthAdjust="spacingAndGlyphs">n</tspan><tspan class="u" x="735.6" textLength="8" lengthAdjust="spacingAndGlyphs">U</tspan></text>
<text class="m" y="480.3" fill="#00ff00"><tspan x="527.6" textLength="32" lengthAdjust="spacingAndGlyphs">7  2</tspan><tspan class="d" x="559.6" textLength="8" lengthAdjust="spacingAndGlyphs">0</tspan><tspan x="567.6" textLength="8" lengthAdjust="spacingAndGlyphs">.</tspan><tspan class="d" x="575.6" textLength="48" lengthAdjust="spacingAndGlyphs">000000</tspan> <tspan x="631.6" textLength="0" lengthAdjust="spacingAndGlyphs"></tspan><tspan class="u" x="631.6" textLength="16" lengthAdjust="spacingAndGlyphs">GH</tspan><tspan x="647.6" textLength="88" lengthAdjust="spacingAndGlyphs">z  512.44 p</tspan><tspan class="u" x="735.6" textLength="8" lengthAdjust="spacingAndGlyphs">U</tspan></text>
<text class="m" y="493.3" fill="#00ff00"><tspan x="519.6" textLength="96" lengthAdjust="spacingAndGlyphs">&gt;8  5.412187</tspan><tspan class="d" x="615.6" textLength="8" lengthAdjust="spacingAndGlyphs">0</tspan> <tspan x="631.6" textLength="0" lengthAdjust="spacingAndGlyphs"></tspan><tspan class="u" x="631.6" textLength="16" lengthAdjust="spacingAndGlyphs">GH</tspan><tspan x="647.6" textLength="32" lengthAdjust="spacingAndGlyphs">z  1</tspan><tspan class="d" x="679.6" textLength="8" lengthAdjust="spacingAndGlyphs">0</tspan><tspan x="687.6" textLength="48" lengthAdjust="spacingAndGlyphs">4.32 n</tspan><tspan class="u" x="735.6" textLength="8" lengthAdjust="spacingAndGlyphs">U</tspan></text>
<clipPath id="c4"><rect x="4" y="380" width="877" height="304"/></clipPath>
<g clip-path="url(#c4)">
<polygon points="509,664.5 517,672.5 509,680.5" fill="#00ff00"/>
<polygon points="878,664.5 870,672.5 878,680.5" fill="#00ff00"/>
<rect x="517" y="672" width="353" height="1" fill="#00ff00"/>
<use href="#mu" x="517" y="672" fill="#00ff00"/>
<use href="#mu" x="524" y="672" fill="#00ff00"/>
<use href="#mu" x="533" y="672" fill="#00ff00"/>
<use href="#mu" x="560" y="672" fill="#00ff00"/>
<use href="#mu" x="604" y="672" fill="#00ff00"/>
<use href="#mu" x="692" y="672" fill="#00ff00"/>
<use href="#mu" x="869" y="672" fill="#00ff00"/>
<use href="#md" x="611" y="672" fill="#00ff00"/>
<text class="m" y="656.9" fill="#00ff00"><tspan x="607.9" textLength="8" lengthAdjust="spacingAndGlyphs">8</tspan></text>
<polygon points="510.5,680.5 517.5,673.5 524.5,680.5" fill="none" stroke="#00ff00" stroke-width="1" shape-rendering="crispEdges"/>
<polygon points="517.5,680.5 524.5,673.5 531.5,680.5" fill="none" stroke="#00ff00" stroke-width="1" shape-rendering="crispEdges"/>
<polygon points="526.5,680.5 533.5,673.5 540.5,680.5" fill="none" stroke="#00ff00" stroke-width="1" shape-rendering="crispEdges"/>
<polygon points="553.5,680.5 560.5,673.5 567.5,680.5" fill="none" stroke="#00ff00" stroke-width="1" shape-rendering="crispEdges"/>
<polygon points="597.5,680.5 604.5,673.5 611.5,680.5" fill="none" stroke="#00ff00" stroke-width="1" shape-rendering="crispEdges"/>
<polygon points="685.5,680.5 692.5,673.5 699.5,680.5" fill="none" stroke="#00ff00" stroke-width="1" shape-rendering="crispEdges"/>
<polygon points="862.5,680.5 869.5,673.5 876.5,680.5" fill="none" stroke="#00ff00" stroke-width="1" shape-rendering="crispEdges"/>
<polygon points="604.5,680.5 611.5,673.5 618.5,680.5" fill="#00ff00" stroke="#00ff00" stroke-width="1" shape-rendering="crispEdges"/>
</g>
</svg>
</body>
</html>
